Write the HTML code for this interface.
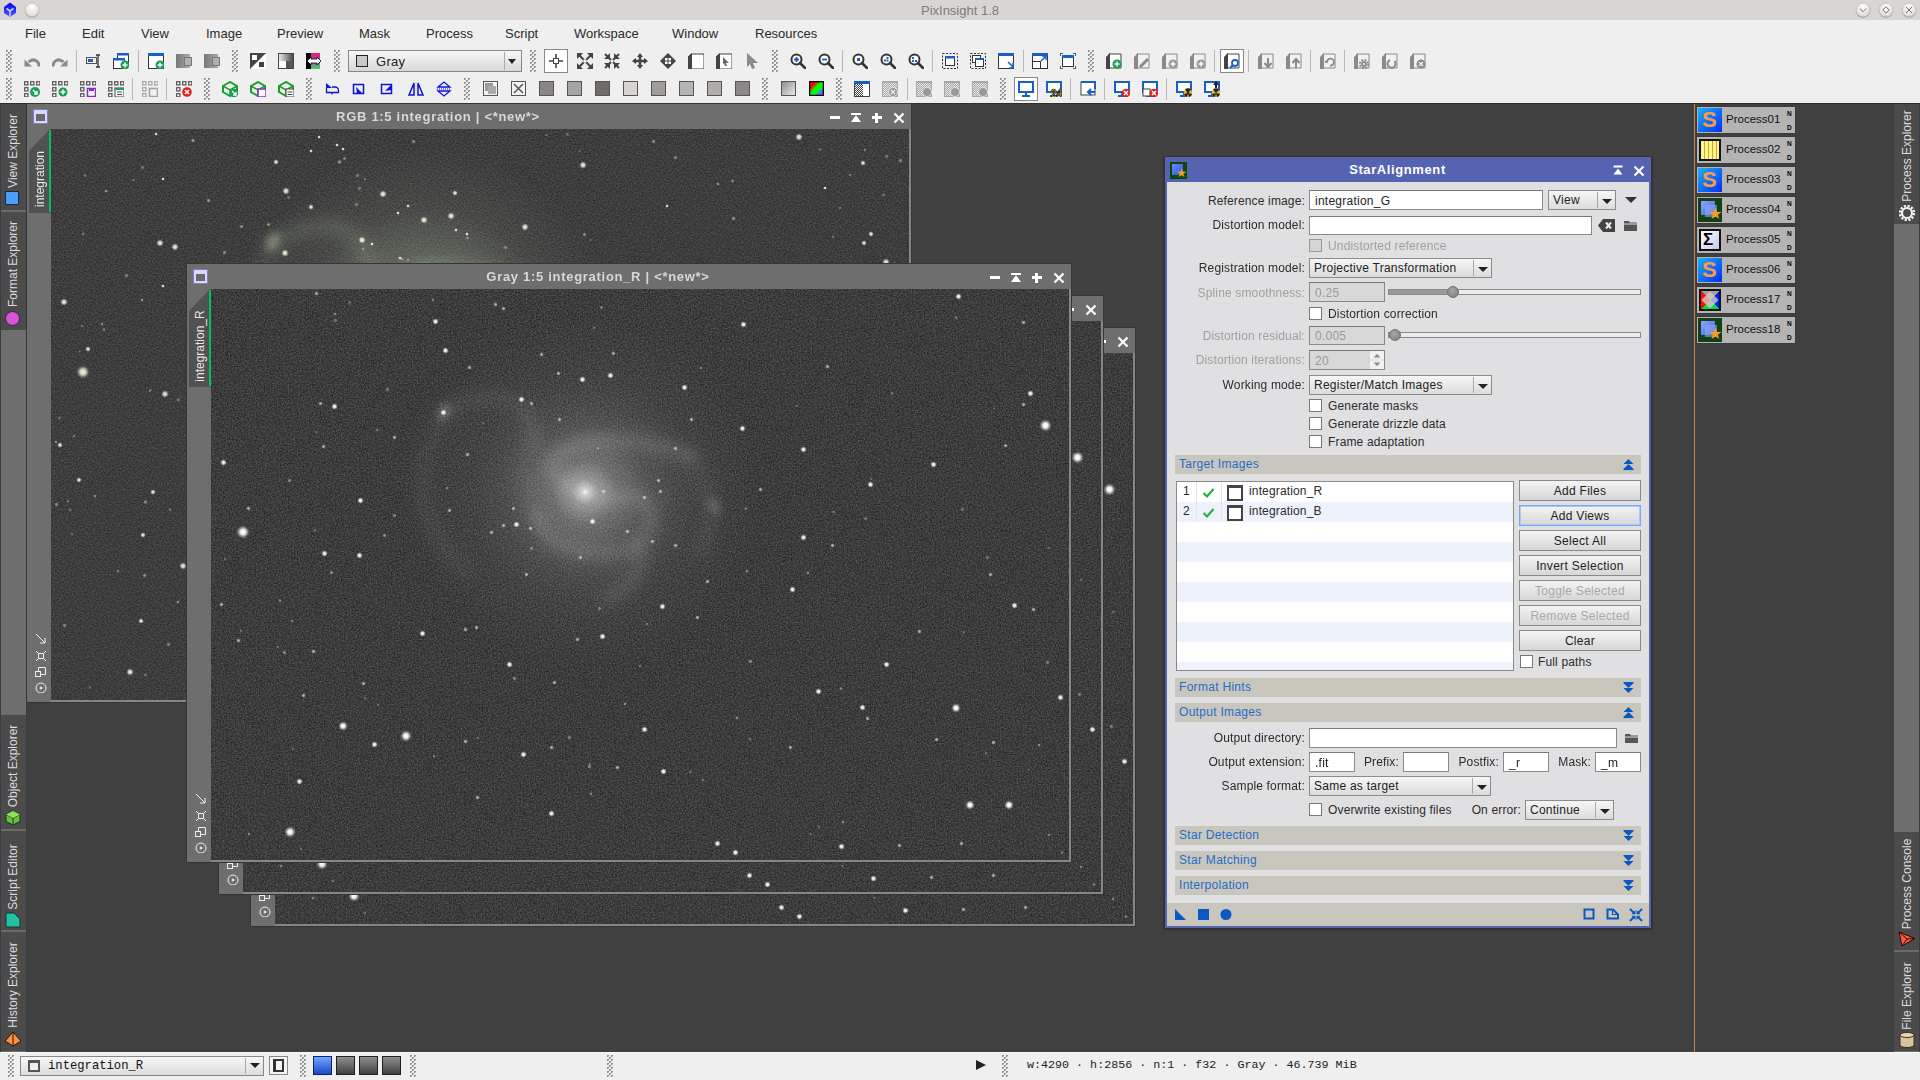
<!DOCTYPE html><html><head><meta charset="utf-8"><style>
*{margin:0;padding:0;box-sizing:border-box}
html,body{width:1920px;height:1080px;overflow:hidden}
body{position:relative;background:#404040;font-family:"Liberation Sans",sans-serif;}
.a{position:absolute}
.t{white-space:nowrap;line-height:1}
.s{position:absolute;display:block;border-radius:50%;--c:255,255,255;background:radial-gradient(circle closest-side,rgba(var(--c),var(--a)) 0,rgba(var(--c),calc(var(--a)*0.92)) 35%,rgba(var(--c),calc(var(--a)*0.45)) 62%,rgba(var(--c),calc(var(--a)*0.12)) 82%,rgba(var(--c),0) 100%)}
</style></head><body><div class="a" style="left:0px;top:0px;width:1920px;height:20px;background:#d9d5d2"></div><div class="a t" style="left:0px;top:4px;width:1920px;text-align:center;font-size:13px;color:#7f7b78">PixInsight 1.8</div><div class="a" style="left:0px;top:20px;width:1920px;height:83px;background:#efefef"></div><div class="a" style="left:0px;top:103px;width:1920px;height:1px;background:#2e2e2e"></div><div class="a t" style="left:25px;top:27px;font-size:13px;color:#2a2a2a">File</div><div class="a t" style="left:82px;top:27px;font-size:13px;color:#2a2a2a">Edit</div><div class="a t" style="left:141px;top:27px;font-size:13px;color:#2a2a2a">View</div><div class="a t" style="left:206px;top:27px;font-size:13px;color:#2a2a2a">Image</div><div class="a t" style="left:277px;top:27px;font-size:13px;color:#2a2a2a">Preview</div><div class="a t" style="left:359px;top:27px;font-size:13px;color:#2a2a2a">Mask</div><div class="a t" style="left:426px;top:27px;font-size:13px;color:#2a2a2a">Process</div><div class="a t" style="left:505px;top:27px;font-size:13px;color:#2a2a2a">Script</div><div class="a t" style="left:574px;top:27px;font-size:13px;color:#2a2a2a">Workspace</div><div class="a t" style="left:672px;top:27px;font-size:13px;color:#2a2a2a">Window</div><div class="a t" style="left:755px;top:27px;font-size:13px;color:#2a2a2a">Resources</div><div class="a" style="left:0px;top:1052px;width:1920px;height:28px;background:#efefef"></div><div class="a" style="left:0px;top:104px;width:26px;height:948px;background:#6e6e6e"></div><div class="a" style="left:26px;top:104px;width:1px;height:948px;background:#3a3a3a"></div><div class="a" style="left:1894px;top:104px;width:26px;height:948px;background:#6e6e6e"></div><div class="a" style="left:1694px;top:104px;width:1px;height:948px;background:#c08850"></div><div class="a" style="left:250px;top:327px;width:886px;height:600px;background:#353535;z-index:3"><div class="a" style="left:1px;top:1px;width:884px;height:598px;background:#6e6e6e"></div><div class="a" style="left:883px;top:26px;width:2px;height:573px;background:#868686"></div><div class="a" style="left:25px;top:597px;width:860px;height:2px;background:#868686"></div><div class="a" style="left:25px;top:26px;width:858px;height:571px;overflow:hidden;background:#393939"><svg class="a" style="left:0;top:0" width="858" height="571"><filter id="nw4" x="0" y="0" width="100%" height="100%" color-interpolation-filters="sRGB"><feTurbulence type="fractalNoise" baseFrequency="0.66" numOctaves="2" seed="29"/><feColorMatrix type="matrix" values="0.32 0 0 0 0.075  0.32 0 0 0 0.075  0.32 0 0 0 0.075  0 0 0 0 1"/></filter><rect width="858" height="571" filter="url(#nw4)"/></svg><svg class="a" style="left:174px;top:3px;overflow:visible" width="400" height="400"><defs><filter id="bnw4" x="-20%" y="-20%" width="140%" height="140%"><feGaussianBlur stdDeviation="7"/></filter><filter id="cnw4" x="-50%" y="-50%" width="200%" height="200%"><feGaussianBlur stdDeviation="4"/></filter><radialGradient id="hnw4"><stop offset="0" stop-color="rgba(255,255,255,0.34)"/><stop offset="0.2" stop-color="rgba(255,255,255,0.22)"/><stop offset="0.4" stop-color="rgba(255,255,255,0.11)"/><stop offset="0.65" stop-color="rgba(255,255,255,0.04)"/><stop offset="1" stop-color="rgba(255,255,255,0)"/></radialGradient><radialGradient id="mnw4"><stop offset="0" stop-color="rgba(255,255,255,0.08)"/><stop offset="0.6" stop-color="rgba(255,255,255,0.04)"/><stop offset="1" stop-color="rgba(255,255,255,0)"/></radialGradient><radialGradient id="knw4"><stop offset="0" stop-color="rgba(255,255,255,0.9)"/><stop offset="0.12" stop-color="rgba(255,255,255,0.55)"/><stop offset="0.4" stop-color="rgba(255,255,255,0.18)"/><stop offset="1" stop-color="rgba(255,255,255,0)"/></radialGradient></defs><circle cx="200" cy="200" r="175" fill="url(#hnw4)"/><g filter="url(#bnw4)"><path d="M190,197 Q190,197 185.0,194.5 Q180,192 173.0,186.5 Q166,181 165.5,175.0 Q165,169 171.5,164.0 Q178,159 188.5,154.5 Q199,150 212.5,148.5 Q226,147 239.0,148.5 Q252,150 265.0,152.5 Q278,155 291.5,159.5 L305,164" fill="none" stroke="rgba(255,255,255,0.10)" stroke-width="16" stroke-linecap="round" stroke-linejoin="round"/><path d="M210,204 Q210,204 220.0,205.0 Q230,206 246.0,205.5 Q262,205 265.0,214.5 Q268,224 263.0,237.0 Q258,250 248.0,255.5 Q238,261 223.5,261.5 Q209,262 195.5,260.0 Q182,258 171.5,252.0 Q161,246 156.5,236.0 L152,226" fill="none" stroke="rgba(255,255,255,0.10)" stroke-width="16" stroke-linecap="round" stroke-linejoin="round"/><path d="M255,255 Q255,255 254.5,267.5 Q254,280 247.0,289.0 Q240,298 230.0,303.0 L220,308" fill="none" stroke="rgba(255,255,255,0.09)" stroke-width="14" stroke-linecap="round" stroke-linejoin="round"/><path d="M150,150 Q150,150 147.5,138.0 Q145,126 135.0,115.5 Q125,105 107.5,105.0 Q90,105 75.0,112.5 L60,120" fill="none" stroke="rgba(255,255,255,0.07)" stroke-width="14" stroke-linecap="round" stroke-linejoin="round"/><path d="M152,226 Q152,226 146.0,213.0 Q140,200 139.0,185.0 Q138,170 144.0,160.0 L150,150" fill="none" stroke="rgba(255,255,255,0.07)" stroke-width="12" stroke-linecap="round" stroke-linejoin="round"/><path d="M60,120 Q60,120 50.0,140.0 Q40,160 37.5,180.0 Q35,200 42.5,222.5 Q50,245 65.0,262.5 L80,280" fill="none" stroke="rgba(255,255,255,0.05)" stroke-width="16" stroke-linecap="round" stroke-linejoin="round"/><path d="M305,164 Q305,164 313.5,179.5 Q322,195 325.0,210.0 Q328,225 321.5,242.5 L315,260" fill="none" stroke="rgba(255,255,255,0.06)" stroke-width="14" stroke-linecap="round" stroke-linejoin="round"/></g><g filter="url(#cnw4)"><path d="M190,197 Q190,197 185.0,194.5 Q180,192 173.0,186.5 Q166,181 165.5,175.0 Q165,169 171.5,164.0 Q178,159 188.5,154.5 Q199,150 212.5,148.5 Q226,147 239.0,148.5 Q252,150 265.0,152.5 Q278,155 291.5,159.5 L305,164" fill="none" stroke="rgba(255,255,255,0.04)" stroke-width="6" stroke-linecap="round" stroke-linejoin="round"/><path d="M210,204 Q210,204 220.0,205.0 Q230,206 246.0,205.5 Q262,205 265.0,214.5 Q268,224 263.0,237.0 Q258,250 248.0,255.5 Q238,261 223.5,261.5 Q209,262 195.5,260.0 Q182,258 171.5,252.0 Q161,246 156.5,236.0 L152,226" fill="none" stroke="rgba(255,255,255,0.04)" stroke-width="6" stroke-linecap="round" stroke-linejoin="round"/></g><g filter="url(#cnw4)"><ellipse cx="59" cy="120" rx="4" ry="9" transform="rotate(25 59 120)" fill="rgba(255,255,255,0.25)"/><ellipse cx="329" cy="214" rx="4" ry="9" transform="rotate(-30 329 214)" fill="rgba(255,255,255,0.22)"/></g><circle cx="200" cy="200" r="65" fill="url(#mnw4)"/><circle cx="200" cy="200" r="32" fill="url(#knw4)"/></svg><i class="s" style="left:24.8px;top:235.8px;width:14.4px;height:14.4px;--a:1.00"></i><i class="s" style="left:827.5px;top:129.5px;width:13.0px;height:13.0px;--a:1.00"></i><i class="s" style="left:189.2px;top:441.2px;width:11.6px;height:11.6px;--a:1.00"></i><i class="s" style="left:73.2px;top:537.2px;width:11.6px;height:11.6px;--a:1.00"></i><i class="s" style="left:739.9px;top:413.9px;width:10.1px;height:10.1px;--a:1.00"></i><i class="s" style="left:753.9px;top:510.9px;width:10.1px;height:10.1px;--a:1.00"></i><i class="s" style="left:792.9px;top:510.9px;width:10.1px;height:10.1px;--a:1.00"></i><i class="s" style="left:126.9px;top:431.9px;width:10.1px;height:10.1px;--a:1.00"></i><i class="s" style="left:9.4px;top:170.4px;width:7.1px;height:7.1px;--a:0.95"></i><i class="s" style="left:120.4px;top:114.4px;width:7.1px;height:7.1px;--a:0.95"></i><i class="s" style="left:146.4px;top:208.4px;width:7.1px;height:7.1px;--a:0.95"></i><i class="s" style="left:221.4px;top:29.4px;width:7.1px;height:7.1px;--a:0.95"></i><i class="s" style="left:231.4px;top:58.4px;width:7.1px;height:7.1px;--a:0.95"></i><i class="s" style="left:229.4px;top:120.4px;width:7.1px;height:7.1px;--a:0.95"></i><i class="s" style="left:302.4px;top:232.4px;width:7.1px;height:7.1px;--a:0.95"></i><i class="s" style="left:307.4px;top:107.4px;width:7.1px;height:7.1px;--a:0.95"></i><i class="s" style="left:368.4px;top:87.4px;width:7.1px;height:7.1px;--a:0.95"></i><i class="s" style="left:396.4px;top:83.4px;width:7.1px;height:7.1px;--a:0.95"></i><i class="s" style="left:378.4px;top:229.4px;width:7.1px;height:7.1px;--a:0.95"></i><i class="s" style="left:529.4px;top:32.4px;width:7.1px;height:7.1px;--a:0.95"></i><i class="s" style="left:470.4px;top:95.4px;width:7.1px;height:7.1px;--a:0.95"></i><i class="s" style="left:528.4px;top:136.4px;width:7.1px;height:7.1px;--a:0.95"></i><i class="s" style="left:589.4px;top:157.4px;width:7.1px;height:7.1px;--a:0.95"></i><i class="s" style="left:719.4px;top:172.4px;width:7.1px;height:7.1px;--a:0.95"></i><i class="s" style="left:656.4px;top:192.4px;width:7.1px;height:7.1px;--a:0.95"></i><i class="s" style="left:589.4px;top:245.4px;width:7.1px;height:7.1px;--a:0.95"></i><i class="s" style="left:816.4px;top:101.4px;width:7.1px;height:7.1px;--a:0.95"></i><i class="s" style="left:160.4px;top:452.4px;width:7.1px;height:7.1px;--a:0.95"></i><i class="s" style="left:85.4px;top:489.4px;width:7.1px;height:7.1px;--a:0.95"></i><i class="s" style="left:208.4px;top:341.4px;width:7.1px;height:7.1px;--a:0.95"></i><i class="s" style="left:295.4px;top:372.4px;width:7.1px;height:7.1px;--a:0.95"></i><i class="s" style="left:388.4px;top:344.4px;width:7.1px;height:7.1px;--a:0.95"></i><i class="s" style="left:309.4px;top:462.4px;width:7.1px;height:7.1px;--a:0.95"></i><i class="s" style="left:337.4px;top:521.4px;width:7.1px;height:7.1px;--a:0.95"></i><i class="s" style="left:578.4px;top:297.4px;width:7.1px;height:7.1px;--a:0.95"></i><i class="s" style="left:448.4px;top:314.4px;width:7.1px;height:7.1px;--a:0.95"></i><i class="s" style="left:672.4px;top:372.4px;width:7.1px;height:7.1px;--a:0.95"></i><i class="s" style="left:604.4px;top:399.4px;width:7.1px;height:7.1px;--a:0.95"></i><i class="s" style="left:648.4px;top:415.4px;width:7.1px;height:7.1px;--a:0.95"></i><i class="s" style="left:846.4px;top:405.4px;width:7.1px;height:7.1px;--a:0.95"></i><i class="s" style="left:430.4px;top:437.4px;width:7.1px;height:7.1px;--a:0.95"></i><i class="s" style="left:449.4px;top:479.4px;width:7.1px;height:7.1px;--a:0.95"></i><i class="s" style="left:800.4px;top:313.4px;width:7.1px;height:7.1px;--a:0.95"></i><i class="s" style="left:503.4px;top:551.4px;width:7.1px;height:7.1px;--a:0.95"></i><i class="s" style="left:521.4px;top:560.4px;width:7.1px;height:7.1px;--a:0.95"></i><i class="s" style="left:627.4px;top:554.4px;width:7.1px;height:7.1px;--a:0.95"></i><i class="s" style="left:110.4px;top:261.4px;width:7.1px;height:7.1px;--a:0.95"></i><i class="s" style="left:145.4px;top:263.4px;width:7.1px;height:7.1px;--a:0.95"></i><i class="s" style="left:744.4px;top:4.4px;width:7.1px;height:7.1px;--a:0.95"></i><i class="s" style="left:705.5px;top:340.4px;width:5.1px;height:5.1px;--a:0.60"></i><i class="s" style="left:776.5px;top:283.4px;width:5.1px;height:5.1px;--a:0.60"></i><i class="s" style="left:779.5px;top:451.4px;width:5.1px;height:5.1px;--a:0.60"></i><i class="s" style="left:685.5px;top:553.5px;width:5.1px;height:5.1px;--a:0.60"></i><i class="s" style="left:747.5px;top:551.5px;width:5.1px;height:5.1px;--a:0.60"></i><i class="s" style="left:318.4px;top:111.5px;width:5.1px;height:5.1px;--a:0.60"></i><i class="s" style="left:346.4px;top:127.5px;width:5.1px;height:5.1px;--a:0.60"></i><i class="s" style="left:478.4px;top:127.5px;width:5.1px;height:5.1px;--a:0.60"></i><i class="s" style="left:447.4px;top:200.4px;width:5.1px;height:5.1px;--a:0.60"></i><i class="s" style="left:431.4px;top:206.4px;width:5.1px;height:5.1px;--a:0.60"></i><i class="s" style="left:390.4px;top:200.4px;width:5.1px;height:5.1px;--a:0.60"></i><i class="s" style="left:278.4px;top:241.4px;width:5.1px;height:5.1px;--a:0.60"></i><i class="s" style="left:317.4px;top:237.4px;width:5.1px;height:5.1px;--a:0.60"></i><i class="s" style="left:300.4px;top:217.4px;width:5.1px;height:5.1px;--a:0.60"></i><i class="s" style="left:414.4px;top:240.4px;width:5.1px;height:5.1px;--a:0.60"></i><i class="s" style="left:462.4px;top:254.4px;width:5.1px;height:5.1px;--a:0.60"></i><i class="s" style="left:367.4px;top:266.4px;width:5.1px;height:5.1px;--a:0.60"></i><i class="s" style="left:494.4px;top:290.4px;width:5.1px;height:5.1px;--a:0.60"></i><i class="s" style="left:313.4px;top:283.4px;width:5.1px;height:5.1px;--a:0.60"></i><i class="s" style="left:345.4px;top:81.5px;width:5.1px;height:5.1px;--a:0.60"></i><i class="s" style="left:34.5px;top:217.4px;width:5.1px;height:5.1px;--a:0.60"></i><i class="s" style="left:106.5px;top:111.5px;width:5.1px;height:5.1px;--a:0.60"></i><i class="s" style="left:109.5px;top:155.4px;width:5.1px;height:5.1px;--a:0.60"></i><i class="s" style="left:256.4px;top:75.5px;width:5.1px;height:5.1px;--a:0.60"></i><i class="s" style="left:181.4px;top:146.4px;width:5.1px;height:5.1px;--a:0.60"></i><i class="s" style="left:254.4px;top:163.4px;width:5.1px;height:5.1px;--a:0.60"></i><i class="s" style="left:236.4px;top:219.4px;width:5.1px;height:5.1px;--a:0.60"></i><i class="s" style="left:290.4px;top:234.4px;width:5.1px;height:5.1px;--a:0.60"></i><i class="s" style="left:328.4px;top:62.5px;width:5.1px;height:5.1px;--a:0.60"></i><i class="s" style="left:400.4px;top:61.5px;width:5.1px;height:5.1px;--a:0.60"></i><i class="s" style="left:282.4px;top:13.4px;width:5.1px;height:5.1px;--a:0.60"></i><i class="s" style="left:290.4px;top:17.4px;width:5.1px;height:5.1px;--a:0.60"></i><i class="s" style="left:102.5px;top:1.5px;width:5.1px;height:5.1px;--a:0.60"></i><i class="s" style="left:809.5px;top:31.4px;width:5.1px;height:5.1px;--a:0.60"></i><i class="s" style="left:809.5px;top:112.5px;width:5.1px;height:5.1px;--a:0.60"></i><i class="s" style="left:462.4px;top:157.4px;width:5.1px;height:5.1px;--a:0.60"></i><i class="s" style="left:546.5px;top:198.4px;width:5.1px;height:5.1px;--a:0.60"></i><i class="s" style="left:618.5px;top:254.4px;width:5.1px;height:5.1px;--a:0.60"></i><i class="s" style="left:439.4px;top:250.4px;width:5.1px;height:5.1px;--a:0.60"></i><i class="s" style="left:613.5px;top:74.5px;width:5.1px;height:5.1px;--a:0.60"></i><i class="s" style="left:791.5px;top:154.4px;width:5.1px;height:5.1px;--a:0.60"></i><i class="s" style="left:445.4px;top:189.4px;width:5.1px;height:5.1px;--a:0.60"></i><i class="s" style="left:7.5px;top:313.4px;width:5.1px;height:5.1px;--a:0.60"></i><i class="s" style="left:25.4px;top:349.4px;width:5.1px;height:5.1px;--a:0.60"></i><i class="s" style="left:99.5px;top:360.4px;width:5.1px;height:5.1px;--a:0.60"></i><i class="s" style="left:89.5px;top:404.4px;width:5.1px;height:5.1px;--a:0.60"></i><i class="s" style="left:364.4px;top:348.4px;width:5.1px;height:5.1px;--a:0.60"></i><i class="s" style="left:341.4px;top:391.4px;width:5.1px;height:5.1px;--a:0.60"></i><i class="s" style="left:264.4px;top:506.4px;width:5.1px;height:5.1px;--a:0.60"></i><i class="s" style="left:404.4px;top:476.4px;width:5.1px;height:5.1px;--a:0.60"></i><i class="s" style="left:338.4px;top:456.4px;width:5.1px;height:5.1px;--a:0.60"></i><i class="s" style="left:252.4px;top:450.4px;width:5.1px;height:5.1px;--a:0.60"></i><i class="s" style="left:150.4px;top:392.4px;width:5.1px;height:5.1px;--a:0.60"></i><i class="s" style="left:263.4px;top:336.4px;width:5.1px;height:5.1px;--a:0.60"></i><i class="s" style="left:252.4px;top:338.4px;width:5.1px;height:5.1px;--a:0.60"></i><i class="s" style="left:484.4px;top:326.4px;width:5.1px;height:5.1px;--a:0.60"></i><i class="s" style="left:653.5px;top:427.4px;width:5.1px;height:5.1px;--a:0.60"></i><i class="s" style="left:576.5px;top:456.4px;width:5.1px;height:5.1px;--a:0.60"></i><i class="s" style="left:722.5px;top:448.4px;width:5.1px;height:5.1px;--a:0.60"></i><i class="s" style="left:819.5px;top:318.4px;width:5.1px;height:5.1px;--a:0.60"></i><i class="s" style="left:386.1px;top:316.5px;width:5.0px;height:5.0px;--a:0.34"></i><i class="s" style="left:433.7px;top:332.5px;width:4.0px;height:4.0px;--a:0.35"></i><i class="s" style="left:537.2px;top:447.9px;width:3.9px;height:3.9px;--a:0.31"></i><i class="s" style="left:79.5px;top:456.9px;width:4.7px;height:4.7px;--a:0.26"></i><i class="s" style="left:835.6px;top:543.9px;width:4.6px;height:4.6px;--a:0.37"></i><i class="s" style="left:136.3px;top:11.2px;width:4.5px;height:4.5px;--a:0.26"></i><i class="s" style="left:164.4px;top:138.8px;width:3.8px;height:3.8px;--a:0.34"></i><i class="s" style="left:376.3px;top:475.4px;width:4.4px;height:4.4px;--a:0.38"></i><i class="s" style="left:426.6px;top:374.5px;width:4.4px;height:4.4px;--a:0.31"></i><i class="s" style="left:848.6px;top:561.1px;width:4.9px;height:4.9px;--a:0.39"></i><i class="s" style="left:270.3px;top:131.8px;width:4.1px;height:4.1px;--a:0.26"></i><i class="s" style="left:652.4px;top:227.2px;width:4.9px;height:4.9px;--a:0.33"></i><i class="s" style="left:815.5px;top:478.5px;width:3.7px;height:3.7px;--a:0.29"></i><i class="s" style="left:774.4px;top:266.1px;width:5.1px;height:5.1px;--a:0.33"></i><i class="s" style="left:64.5px;top:355.7px;width:4.8px;height:4.8px;--a:0.30"></i><i class="s" style="left:76.4px;top:189.1px;width:5.1px;height:5.1px;--a:0.40"></i><i class="s" style="left:103.1px;top:141.3px;width:3.9px;height:3.9px;--a:0.26"></i><i class="s" style="left:678.6px;top:102.4px;width:4.5px;height:4.5px;--a:0.34"></i><i class="s" style="left:164.7px;top:413.6px;width:3.9px;height:3.9px;--a:0.38"></i><i class="s" style="left:101.8px;top:239.0px;width:4.0px;height:4.0px;--a:0.30"></i><i class="s" style="left:826.3px;top:453.6px;width:4.2px;height:4.2px;--a:0.43"></i><i class="s" style="left:181.2px;top:223.7px;width:4.9px;height:4.9px;--a:0.38"></i><i class="s" style="left:88.1px;top:558.0px;width:4.0px;height:4.0px;--a:0.30"></i><i class="s" style="left:658.2px;top:187.5px;width:4.1px;height:4.1px;--a:0.26"></i><i class="s" style="left:79.4px;top:329.9px;width:4.1px;height:4.1px;--a:0.37"></i><i class="s" style="left:317.7px;top:256.7px;width:5.0px;height:5.0px;--a:0.35"></i><i class="s" style="left:490.2px;top:489.1px;width:4.0px;height:4.0px;--a:0.28"></i><i class="s" style="left:773.3px;top:461.7px;width:4.1px;height:4.1px;--a:0.29"></i><i class="s" style="left:630.0px;top:530.6px;width:4.0px;height:4.0px;--a:0.44"></i><i class="s" style="left:750.9px;top:341.4px;width:4.3px;height:4.3px;--a:0.27"></i><i class="s" style="left:35.8px;top:543.0px;width:4.1px;height:4.1px;--a:0.39"></i><i class="s" style="left:220.6px;top:464.8px;width:4.6px;height:4.6px;--a:0.31"></i><i class="s" style="left:151.9px;top:407.2px;width:3.8px;height:3.8px;--a:0.30"></i><i class="s" style="left:477.1px;top:480.9px;width:4.6px;height:4.6px;--a:0.31"></i><i class="s" style="left:781.0px;top:117.6px;width:3.8px;height:3.8px;--a:0.30"></i><i class="s" style="left:381.0px;top:36.9px;width:4.0px;height:4.0px;--a:0.32"></i><i class="s" style="left:488.1px;top:76.7px;width:4.2px;height:4.2px;--a:0.43"></i><i class="s" style="left:834.1px;top:371.2px;width:4.7px;height:4.7px;--a:0.37"></i><i class="s" style="left:122.1px;top:22.8px;width:3.8px;height:3.8px;--a:0.43"></i><i class="s" style="left:597.5px;top:543.2px;width:3.8px;height:3.8px;--a:0.38"></i><i class="s" style="left:411.8px;top:412.7px;width:4.2px;height:4.2px;--a:0.45"></i><i class="s" style="left:66.5px;top:309.0px;width:4.7px;height:4.7px;--a:0.43"></i><i class="s" style="left:627.6px;top:397.4px;width:4.8px;height:4.8px;--a:0.43"></i><i class="s" style="left:300.9px;top:386.9px;width:5.0px;height:5.0px;--a:0.42"></i><i class="s" style="left:356.3px;top:446.0px;width:4.9px;height:4.9px;--a:0.36"></i><i class="s" style="left:532.7px;top:217.2px;width:4.5px;height:4.5px;--a:0.37"></i><i class="s" style="left:70.5px;top:361.2px;width:5.1px;height:5.1px;--a:0.43"></i><i class="s" style="left:620.1px;top:220.5px;width:4.7px;height:4.7px;--a:0.37"></i><i class="s" style="left:376.6px;top:473.4px;width:3.9px;height:3.9px;--a:0.40"></i><i class="s" style="left:28.1px;top:340.1px;width:4.4px;height:4.4px;--a:0.30"></i><i class="s" style="left:594.9px;top:281.7px;width:4.6px;height:4.6px;--a:0.43"></i><i class="s" style="left:219.9px;top:9.3px;width:4.1px;height:4.1px;--a:0.39"></i><i class="s" style="left:174.3px;top:97.7px;width:5.0px;height:5.0px;--a:0.38"></i><i class="s" style="left:377.7px;top:503.2px;width:4.2px;height:4.2px;--a:0.38"></i><i class="s" style="left:170.9px;top:244.3px;width:4.8px;height:4.8px;--a:0.43"></i><i class="s" style="left:749.2px;top:218.4px;width:4.5px;height:4.5px;--a:0.31"></i><i class="s" style="left:118.0px;top:281.1px;width:4.9px;height:4.9px;--a:0.42"></i><i class="s" style="left:606.1px;top:535.9px;width:4.1px;height:4.1px;--a:0.28"></i><i class="s" style="left:385.1px;top:157.4px;width:4.0px;height:4.0px;--a:0.33"></i><i class="s" style="left:533.5px;top:280.0px;width:4.2px;height:4.2px;--a:0.42"></i><i class="s" style="left:835.8px;top:256.9px;width:3.8px;height:3.8px;--a:0.26"></i><i class="s" style="left:742.8px;top:25.9px;width:4.7px;height:4.7px;--a:0.36"></i><i class="s" style="left:265.2px;top:447.2px;width:3.8px;height:3.8px;--a:0.28"></i><i class="s" style="left:388.3px;top:16.4px;width:4.9px;height:4.9px;--a:0.30"></i><i class="s" style="left:122.2px;top:29.0px;width:4.6px;height:4.6px;--a:0.34"></i><i class="s" style="left:536.8px;top:370.1px;width:4.8px;height:4.8px;--a:0.44"></i><i class="s" style="left:583.3px;top:114.6px;width:4.4px;height:4.4px;--a:0.29"></i><i class="s" style="left:11.8px;top:267.5px;width:4.7px;height:4.7px;--a:0.29"></i><i class="s" style="left:233.6px;top:196.6px;width:4.7px;height:4.7px;--a:0.35"></i><i class="s" style="left:523.9px;top:427.1px;width:4.3px;height:4.3px;--a:0.41"></i></div><div class="a t" style="left:112px;top:7px;width:600px;text-align:center;font-weight:bold;font-size:13px;letter-spacing:0.7px;color:#d8d8d8">Gray 1:5 integration_B | &lt;*new*&gt;</div><div class="a" style="left:7px;top:6px;width:15px;height:15px;background:#d8d8ff;border:1px solid #8080c0"><div class="a" style="left:2px;top:4px;width:9px;height:7px;background:#6a6a6a"></div></div><div class="a" style="left:3px;top:26px;width:22px;height:98px;background:#515151;clip-path:polygon(0 22px,21px 0,100% 0,100% 100%,0 100%)"></div><div class="a" style="left:23px;top:27px;width:2px;height:96px;background:#00c060"></div><div class="a t" style="left:-46px;top:77.0px;width:120px;text-align:center;transform:rotate(-90deg);font-size:12px;color:#e8e8e8">integration_B</div><div class="a" style="left:804px;top:13px;width:10px;height:3px;background:#fff"></div><div class="a" style="left:825px;top:10px;width:10px;height:2px;background:#fff"></div><div class="a" style="left:825px;top:12px;width:0;height:0;border-left:5px solid transparent;border-right:5px solid transparent;border-bottom:7px solid #fff"></div><div class="a" style="left:846px;top:13px;width:10px;height:3px;background:#fff"></div><div class="a" style="left:849px;top:10px;width:3px;height:10px;background:#fff"></div><svg class="a" style="left:867px;top:9px" width="12" height="12"><path d="M1.5 1.5L10.5 10.5M10.5 1.5L1.5 10.5" stroke="#fff" stroke-width="2.2"/></svg><svg class="a" style="left:9px;top:530px" width="12" height="60"><g fill="none" stroke="#f0f0f0" stroke-width="1"><path d="M1 1L10 10M10 5V10H5"/><rect x="3.5" y="20.5" width="5" height="5"/><path d="M1 18L4 21M11 18L8 21M1 28L4 25M11 28L8 25"/><rect x="0.5" y="38.5" width="5" height="5"/><path d="M3.5 38.5V34.5H10.5V41.5H5.5"/><circle cx="6" cy="55" r="5"/><circle cx="6" cy="55" r="1" fill="#f0f0f0"/></g></svg></div><div class="a" style="left:218px;top:295px;width:886px;height:600px;background:#353535;z-index:4"><div class="a" style="left:1px;top:1px;width:884px;height:598px;background:#6e6e6e"></div><div class="a" style="left:883px;top:26px;width:2px;height:573px;background:#868686"></div><div class="a" style="left:25px;top:597px;width:860px;height:2px;background:#868686"></div><div class="a" style="left:25px;top:26px;width:858px;height:571px;overflow:hidden;background:#393939"><svg class="a" style="left:0;top:0" width="858" height="571"><filter id="nw3" x="0" y="0" width="100%" height="100%" color-interpolation-filters="sRGB"><feTurbulence type="fractalNoise" baseFrequency="0.66" numOctaves="2" seed="20"/><feColorMatrix type="matrix" values="0.32 0 0 0 0.075  0.32 0 0 0 0.075  0.32 0 0 0 0.075  0 0 0 0 1"/></filter><rect width="858" height="571" filter="url(#nw3)"/></svg><svg class="a" style="left:174px;top:3px;overflow:visible" width="400" height="400"><defs><filter id="bnw3" x="-20%" y="-20%" width="140%" height="140%"><feGaussianBlur stdDeviation="7"/></filter><filter id="cnw3" x="-50%" y="-50%" width="200%" height="200%"><feGaussianBlur stdDeviation="4"/></filter><radialGradient id="hnw3"><stop offset="0" stop-color="rgba(255,255,255,0.34)"/><stop offset="0.2" stop-color="rgba(255,255,255,0.22)"/><stop offset="0.4" stop-color="rgba(255,255,255,0.11)"/><stop offset="0.65" stop-color="rgba(255,255,255,0.04)"/><stop offset="1" stop-color="rgba(255,255,255,0)"/></radialGradient><radialGradient id="mnw3"><stop offset="0" stop-color="rgba(255,255,255,0.08)"/><stop offset="0.6" stop-color="rgba(255,255,255,0.04)"/><stop offset="1" stop-color="rgba(255,255,255,0)"/></radialGradient><radialGradient id="knw3"><stop offset="0" stop-color="rgba(255,255,255,0.9)"/><stop offset="0.12" stop-color="rgba(255,255,255,0.55)"/><stop offset="0.4" stop-color="rgba(255,255,255,0.18)"/><stop offset="1" stop-color="rgba(255,255,255,0)"/></radialGradient></defs><circle cx="200" cy="200" r="175" fill="url(#hnw3)"/><g filter="url(#bnw3)"><path d="M190,197 Q190,197 185.0,194.5 Q180,192 173.0,186.5 Q166,181 165.5,175.0 Q165,169 171.5,164.0 Q178,159 188.5,154.5 Q199,150 212.5,148.5 Q226,147 239.0,148.5 Q252,150 265.0,152.5 Q278,155 291.5,159.5 L305,164" fill="none" stroke="rgba(255,255,255,0.10)" stroke-width="16" stroke-linecap="round" stroke-linejoin="round"/><path d="M210,204 Q210,204 220.0,205.0 Q230,206 246.0,205.5 Q262,205 265.0,214.5 Q268,224 263.0,237.0 Q258,250 248.0,255.5 Q238,261 223.5,261.5 Q209,262 195.5,260.0 Q182,258 171.5,252.0 Q161,246 156.5,236.0 L152,226" fill="none" stroke="rgba(255,255,255,0.10)" stroke-width="16" stroke-linecap="round" stroke-linejoin="round"/><path d="M255,255 Q255,255 254.5,267.5 Q254,280 247.0,289.0 Q240,298 230.0,303.0 L220,308" fill="none" stroke="rgba(255,255,255,0.09)" stroke-width="14" stroke-linecap="round" stroke-linejoin="round"/><path d="M150,150 Q150,150 147.5,138.0 Q145,126 135.0,115.5 Q125,105 107.5,105.0 Q90,105 75.0,112.5 L60,120" fill="none" stroke="rgba(255,255,255,0.07)" stroke-width="14" stroke-linecap="round" stroke-linejoin="round"/><path d="M152,226 Q152,226 146.0,213.0 Q140,200 139.0,185.0 Q138,170 144.0,160.0 L150,150" fill="none" stroke="rgba(255,255,255,0.07)" stroke-width="12" stroke-linecap="round" stroke-linejoin="round"/><path d="M60,120 Q60,120 50.0,140.0 Q40,160 37.5,180.0 Q35,200 42.5,222.5 Q50,245 65.0,262.5 L80,280" fill="none" stroke="rgba(255,255,255,0.05)" stroke-width="16" stroke-linecap="round" stroke-linejoin="round"/><path d="M305,164 Q305,164 313.5,179.5 Q322,195 325.0,210.0 Q328,225 321.5,242.5 L315,260" fill="none" stroke="rgba(255,255,255,0.06)" stroke-width="14" stroke-linecap="round" stroke-linejoin="round"/></g><g filter="url(#cnw3)"><path d="M190,197 Q190,197 185.0,194.5 Q180,192 173.0,186.5 Q166,181 165.5,175.0 Q165,169 171.5,164.0 Q178,159 188.5,154.5 Q199,150 212.5,148.5 Q226,147 239.0,148.5 Q252,150 265.0,152.5 Q278,155 291.5,159.5 L305,164" fill="none" stroke="rgba(255,255,255,0.04)" stroke-width="6" stroke-linecap="round" stroke-linejoin="round"/><path d="M210,204 Q210,204 220.0,205.0 Q230,206 246.0,205.5 Q262,205 265.0,214.5 Q268,224 263.0,237.0 Q258,250 248.0,255.5 Q238,261 223.5,261.5 Q209,262 195.5,260.0 Q182,258 171.5,252.0 Q161,246 156.5,236.0 L152,226" fill="none" stroke="rgba(255,255,255,0.04)" stroke-width="6" stroke-linecap="round" stroke-linejoin="round"/></g><g filter="url(#cnw3)"><ellipse cx="59" cy="120" rx="4" ry="9" transform="rotate(25 59 120)" fill="rgba(255,255,255,0.25)"/><ellipse cx="329" cy="214" rx="4" ry="9" transform="rotate(-30 329 214)" fill="rgba(255,255,255,0.22)"/></g><circle cx="200" cy="200" r="65" fill="url(#mnw3)"/><circle cx="200" cy="200" r="32" fill="url(#knw3)"/></svg><i class="s" style="left:24.8px;top:235.8px;width:14.4px;height:14.4px;--a:1.00"></i><i class="s" style="left:827.5px;top:129.5px;width:13.0px;height:13.0px;--a:1.00"></i><i class="s" style="left:189.2px;top:441.2px;width:11.6px;height:11.6px;--a:1.00"></i><i class="s" style="left:73.2px;top:537.2px;width:11.6px;height:11.6px;--a:1.00"></i><i class="s" style="left:739.9px;top:413.9px;width:10.1px;height:10.1px;--a:1.00"></i><i class="s" style="left:753.9px;top:510.9px;width:10.1px;height:10.1px;--a:1.00"></i><i class="s" style="left:792.9px;top:510.9px;width:10.1px;height:10.1px;--a:1.00"></i><i class="s" style="left:126.9px;top:431.9px;width:10.1px;height:10.1px;--a:1.00"></i><i class="s" style="left:9.4px;top:170.4px;width:7.1px;height:7.1px;--a:0.95"></i><i class="s" style="left:120.4px;top:114.4px;width:7.1px;height:7.1px;--a:0.95"></i><i class="s" style="left:146.4px;top:208.4px;width:7.1px;height:7.1px;--a:0.95"></i><i class="s" style="left:221.4px;top:29.4px;width:7.1px;height:7.1px;--a:0.95"></i><i class="s" style="left:231.4px;top:58.4px;width:7.1px;height:7.1px;--a:0.95"></i><i class="s" style="left:229.4px;top:120.4px;width:7.1px;height:7.1px;--a:0.95"></i><i class="s" style="left:302.4px;top:232.4px;width:7.1px;height:7.1px;--a:0.95"></i><i class="s" style="left:307.4px;top:107.4px;width:7.1px;height:7.1px;--a:0.95"></i><i class="s" style="left:368.4px;top:87.4px;width:7.1px;height:7.1px;--a:0.95"></i><i class="s" style="left:396.4px;top:83.4px;width:7.1px;height:7.1px;--a:0.95"></i><i class="s" style="left:378.4px;top:229.4px;width:7.1px;height:7.1px;--a:0.95"></i><i class="s" style="left:529.4px;top:32.4px;width:7.1px;height:7.1px;--a:0.95"></i><i class="s" style="left:470.4px;top:95.4px;width:7.1px;height:7.1px;--a:0.95"></i><i class="s" style="left:528.4px;top:136.4px;width:7.1px;height:7.1px;--a:0.95"></i><i class="s" style="left:589.4px;top:157.4px;width:7.1px;height:7.1px;--a:0.95"></i><i class="s" style="left:719.4px;top:172.4px;width:7.1px;height:7.1px;--a:0.95"></i><i class="s" style="left:656.4px;top:192.4px;width:7.1px;height:7.1px;--a:0.95"></i><i class="s" style="left:589.4px;top:245.4px;width:7.1px;height:7.1px;--a:0.95"></i><i class="s" style="left:816.4px;top:101.4px;width:7.1px;height:7.1px;--a:0.95"></i><i class="s" style="left:160.4px;top:452.4px;width:7.1px;height:7.1px;--a:0.95"></i><i class="s" style="left:85.4px;top:489.4px;width:7.1px;height:7.1px;--a:0.95"></i><i class="s" style="left:208.4px;top:341.4px;width:7.1px;height:7.1px;--a:0.95"></i><i class="s" style="left:295.4px;top:372.4px;width:7.1px;height:7.1px;--a:0.95"></i><i class="s" style="left:388.4px;top:344.4px;width:7.1px;height:7.1px;--a:0.95"></i><i class="s" style="left:309.4px;top:462.4px;width:7.1px;height:7.1px;--a:0.95"></i><i class="s" style="left:337.4px;top:521.4px;width:7.1px;height:7.1px;--a:0.95"></i><i class="s" style="left:578.4px;top:297.4px;width:7.1px;height:7.1px;--a:0.95"></i><i class="s" style="left:448.4px;top:314.4px;width:7.1px;height:7.1px;--a:0.95"></i><i class="s" style="left:672.4px;top:372.4px;width:7.1px;height:7.1px;--a:0.95"></i><i class="s" style="left:604.4px;top:399.4px;width:7.1px;height:7.1px;--a:0.95"></i><i class="s" style="left:648.4px;top:415.4px;width:7.1px;height:7.1px;--a:0.95"></i><i class="s" style="left:846.4px;top:405.4px;width:7.1px;height:7.1px;--a:0.95"></i><i class="s" style="left:430.4px;top:437.4px;width:7.1px;height:7.1px;--a:0.95"></i><i class="s" style="left:449.4px;top:479.4px;width:7.1px;height:7.1px;--a:0.95"></i><i class="s" style="left:800.4px;top:313.4px;width:7.1px;height:7.1px;--a:0.95"></i><i class="s" style="left:503.4px;top:551.4px;width:7.1px;height:7.1px;--a:0.95"></i><i class="s" style="left:521.4px;top:560.4px;width:7.1px;height:7.1px;--a:0.95"></i><i class="s" style="left:627.4px;top:554.4px;width:7.1px;height:7.1px;--a:0.95"></i><i class="s" style="left:110.4px;top:261.4px;width:7.1px;height:7.1px;--a:0.95"></i><i class="s" style="left:145.4px;top:263.4px;width:7.1px;height:7.1px;--a:0.95"></i><i class="s" style="left:744.4px;top:4.4px;width:7.1px;height:7.1px;--a:0.95"></i><i class="s" style="left:705.5px;top:340.4px;width:5.1px;height:5.1px;--a:0.60"></i><i class="s" style="left:776.5px;top:283.4px;width:5.1px;height:5.1px;--a:0.60"></i><i class="s" style="left:779.5px;top:451.4px;width:5.1px;height:5.1px;--a:0.60"></i><i class="s" style="left:685.5px;top:553.5px;width:5.1px;height:5.1px;--a:0.60"></i><i class="s" style="left:747.5px;top:551.5px;width:5.1px;height:5.1px;--a:0.60"></i><i class="s" style="left:318.4px;top:111.5px;width:5.1px;height:5.1px;--a:0.60"></i><i class="s" style="left:346.4px;top:127.5px;width:5.1px;height:5.1px;--a:0.60"></i><i class="s" style="left:478.4px;top:127.5px;width:5.1px;height:5.1px;--a:0.60"></i><i class="s" style="left:447.4px;top:200.4px;width:5.1px;height:5.1px;--a:0.60"></i><i class="s" style="left:431.4px;top:206.4px;width:5.1px;height:5.1px;--a:0.60"></i><i class="s" style="left:390.4px;top:200.4px;width:5.1px;height:5.1px;--a:0.60"></i><i class="s" style="left:278.4px;top:241.4px;width:5.1px;height:5.1px;--a:0.60"></i><i class="s" style="left:317.4px;top:237.4px;width:5.1px;height:5.1px;--a:0.60"></i><i class="s" style="left:300.4px;top:217.4px;width:5.1px;height:5.1px;--a:0.60"></i><i class="s" style="left:414.4px;top:240.4px;width:5.1px;height:5.1px;--a:0.60"></i><i class="s" style="left:462.4px;top:254.4px;width:5.1px;height:5.1px;--a:0.60"></i><i class="s" style="left:367.4px;top:266.4px;width:5.1px;height:5.1px;--a:0.60"></i><i class="s" style="left:494.4px;top:290.4px;width:5.1px;height:5.1px;--a:0.60"></i><i class="s" style="left:313.4px;top:283.4px;width:5.1px;height:5.1px;--a:0.60"></i><i class="s" style="left:345.4px;top:81.5px;width:5.1px;height:5.1px;--a:0.60"></i><i class="s" style="left:34.5px;top:217.4px;width:5.1px;height:5.1px;--a:0.60"></i><i class="s" style="left:106.5px;top:111.5px;width:5.1px;height:5.1px;--a:0.60"></i><i class="s" style="left:109.5px;top:155.4px;width:5.1px;height:5.1px;--a:0.60"></i><i class="s" style="left:256.4px;top:75.5px;width:5.1px;height:5.1px;--a:0.60"></i><i class="s" style="left:181.4px;top:146.4px;width:5.1px;height:5.1px;--a:0.60"></i><i class="s" style="left:254.4px;top:163.4px;width:5.1px;height:5.1px;--a:0.60"></i><i class="s" style="left:236.4px;top:219.4px;width:5.1px;height:5.1px;--a:0.60"></i><i class="s" style="left:290.4px;top:234.4px;width:5.1px;height:5.1px;--a:0.60"></i><i class="s" style="left:328.4px;top:62.5px;width:5.1px;height:5.1px;--a:0.60"></i><i class="s" style="left:400.4px;top:61.5px;width:5.1px;height:5.1px;--a:0.60"></i><i class="s" style="left:282.4px;top:13.4px;width:5.1px;height:5.1px;--a:0.60"></i><i class="s" style="left:290.4px;top:17.4px;width:5.1px;height:5.1px;--a:0.60"></i><i class="s" style="left:102.5px;top:1.5px;width:5.1px;height:5.1px;--a:0.60"></i><i class="s" style="left:809.5px;top:31.4px;width:5.1px;height:5.1px;--a:0.60"></i><i class="s" style="left:809.5px;top:112.5px;width:5.1px;height:5.1px;--a:0.60"></i><i class="s" style="left:462.4px;top:157.4px;width:5.1px;height:5.1px;--a:0.60"></i><i class="s" style="left:546.5px;top:198.4px;width:5.1px;height:5.1px;--a:0.60"></i><i class="s" style="left:618.5px;top:254.4px;width:5.1px;height:5.1px;--a:0.60"></i><i class="s" style="left:439.4px;top:250.4px;width:5.1px;height:5.1px;--a:0.60"></i><i class="s" style="left:613.5px;top:74.5px;width:5.1px;height:5.1px;--a:0.60"></i><i class="s" style="left:791.5px;top:154.4px;width:5.1px;height:5.1px;--a:0.60"></i><i class="s" style="left:445.4px;top:189.4px;width:5.1px;height:5.1px;--a:0.60"></i><i class="s" style="left:7.5px;top:313.4px;width:5.1px;height:5.1px;--a:0.60"></i><i class="s" style="left:25.4px;top:349.4px;width:5.1px;height:5.1px;--a:0.60"></i><i class="s" style="left:99.5px;top:360.4px;width:5.1px;height:5.1px;--a:0.60"></i><i class="s" style="left:89.5px;top:404.4px;width:5.1px;height:5.1px;--a:0.60"></i><i class="s" style="left:364.4px;top:348.4px;width:5.1px;height:5.1px;--a:0.60"></i><i class="s" style="left:341.4px;top:391.4px;width:5.1px;height:5.1px;--a:0.60"></i><i class="s" style="left:264.4px;top:506.4px;width:5.1px;height:5.1px;--a:0.60"></i><i class="s" style="left:404.4px;top:476.4px;width:5.1px;height:5.1px;--a:0.60"></i><i class="s" style="left:338.4px;top:456.4px;width:5.1px;height:5.1px;--a:0.60"></i><i class="s" style="left:252.4px;top:450.4px;width:5.1px;height:5.1px;--a:0.60"></i><i class="s" style="left:150.4px;top:392.4px;width:5.1px;height:5.1px;--a:0.60"></i><i class="s" style="left:263.4px;top:336.4px;width:5.1px;height:5.1px;--a:0.60"></i><i class="s" style="left:252.4px;top:338.4px;width:5.1px;height:5.1px;--a:0.60"></i><i class="s" style="left:484.4px;top:326.4px;width:5.1px;height:5.1px;--a:0.60"></i><i class="s" style="left:653.5px;top:427.4px;width:5.1px;height:5.1px;--a:0.60"></i><i class="s" style="left:576.5px;top:456.4px;width:5.1px;height:5.1px;--a:0.60"></i><i class="s" style="left:722.5px;top:448.4px;width:5.1px;height:5.1px;--a:0.60"></i><i class="s" style="left:819.5px;top:318.4px;width:5.1px;height:5.1px;--a:0.60"></i><i class="s" style="left:386.1px;top:316.5px;width:5.0px;height:5.0px;--a:0.34"></i><i class="s" style="left:433.7px;top:332.5px;width:4.0px;height:4.0px;--a:0.35"></i><i class="s" style="left:537.2px;top:447.9px;width:3.9px;height:3.9px;--a:0.31"></i><i class="s" style="left:79.5px;top:456.9px;width:4.7px;height:4.7px;--a:0.26"></i><i class="s" style="left:835.6px;top:543.9px;width:4.6px;height:4.6px;--a:0.37"></i><i class="s" style="left:136.3px;top:11.2px;width:4.5px;height:4.5px;--a:0.26"></i><i class="s" style="left:164.4px;top:138.8px;width:3.8px;height:3.8px;--a:0.34"></i><i class="s" style="left:376.3px;top:475.4px;width:4.4px;height:4.4px;--a:0.38"></i><i class="s" style="left:426.6px;top:374.5px;width:4.4px;height:4.4px;--a:0.31"></i><i class="s" style="left:848.6px;top:561.1px;width:4.9px;height:4.9px;--a:0.39"></i><i class="s" style="left:270.3px;top:131.8px;width:4.1px;height:4.1px;--a:0.26"></i><i class="s" style="left:652.4px;top:227.2px;width:4.9px;height:4.9px;--a:0.33"></i><i class="s" style="left:815.5px;top:478.5px;width:3.7px;height:3.7px;--a:0.29"></i><i class="s" style="left:774.4px;top:266.1px;width:5.1px;height:5.1px;--a:0.33"></i><i class="s" style="left:64.5px;top:355.7px;width:4.8px;height:4.8px;--a:0.30"></i><i class="s" style="left:76.4px;top:189.1px;width:5.1px;height:5.1px;--a:0.40"></i><i class="s" style="left:103.1px;top:141.3px;width:3.9px;height:3.9px;--a:0.26"></i><i class="s" style="left:678.6px;top:102.4px;width:4.5px;height:4.5px;--a:0.34"></i><i class="s" style="left:164.7px;top:413.6px;width:3.9px;height:3.9px;--a:0.38"></i><i class="s" style="left:101.8px;top:239.0px;width:4.0px;height:4.0px;--a:0.30"></i><i class="s" style="left:826.3px;top:453.6px;width:4.2px;height:4.2px;--a:0.43"></i><i class="s" style="left:181.2px;top:223.7px;width:4.9px;height:4.9px;--a:0.38"></i><i class="s" style="left:88.1px;top:558.0px;width:4.0px;height:4.0px;--a:0.30"></i><i class="s" style="left:658.2px;top:187.5px;width:4.1px;height:4.1px;--a:0.26"></i><i class="s" style="left:79.4px;top:329.9px;width:4.1px;height:4.1px;--a:0.37"></i><i class="s" style="left:317.7px;top:256.7px;width:5.0px;height:5.0px;--a:0.35"></i><i class="s" style="left:490.2px;top:489.1px;width:4.0px;height:4.0px;--a:0.28"></i><i class="s" style="left:773.3px;top:461.7px;width:4.1px;height:4.1px;--a:0.29"></i><i class="s" style="left:630.0px;top:530.6px;width:4.0px;height:4.0px;--a:0.44"></i><i class="s" style="left:750.9px;top:341.4px;width:4.3px;height:4.3px;--a:0.27"></i><i class="s" style="left:35.8px;top:543.0px;width:4.1px;height:4.1px;--a:0.39"></i><i class="s" style="left:220.6px;top:464.8px;width:4.6px;height:4.6px;--a:0.31"></i><i class="s" style="left:151.9px;top:407.2px;width:3.8px;height:3.8px;--a:0.30"></i><i class="s" style="left:477.1px;top:480.9px;width:4.6px;height:4.6px;--a:0.31"></i><i class="s" style="left:781.0px;top:117.6px;width:3.8px;height:3.8px;--a:0.30"></i><i class="s" style="left:381.0px;top:36.9px;width:4.0px;height:4.0px;--a:0.32"></i><i class="s" style="left:488.1px;top:76.7px;width:4.2px;height:4.2px;--a:0.43"></i><i class="s" style="left:834.1px;top:371.2px;width:4.7px;height:4.7px;--a:0.37"></i><i class="s" style="left:122.1px;top:22.8px;width:3.8px;height:3.8px;--a:0.43"></i><i class="s" style="left:597.5px;top:543.2px;width:3.8px;height:3.8px;--a:0.38"></i><i class="s" style="left:411.8px;top:412.7px;width:4.2px;height:4.2px;--a:0.45"></i><i class="s" style="left:66.5px;top:309.0px;width:4.7px;height:4.7px;--a:0.43"></i><i class="s" style="left:627.6px;top:397.4px;width:4.8px;height:4.8px;--a:0.43"></i><i class="s" style="left:300.9px;top:386.9px;width:5.0px;height:5.0px;--a:0.42"></i><i class="s" style="left:356.3px;top:446.0px;width:4.9px;height:4.9px;--a:0.36"></i><i class="s" style="left:532.7px;top:217.2px;width:4.5px;height:4.5px;--a:0.37"></i><i class="s" style="left:70.5px;top:361.2px;width:5.1px;height:5.1px;--a:0.43"></i><i class="s" style="left:620.1px;top:220.5px;width:4.7px;height:4.7px;--a:0.37"></i><i class="s" style="left:376.6px;top:473.4px;width:3.9px;height:3.9px;--a:0.40"></i><i class="s" style="left:28.1px;top:340.1px;width:4.4px;height:4.4px;--a:0.30"></i><i class="s" style="left:594.9px;top:281.7px;width:4.6px;height:4.6px;--a:0.43"></i><i class="s" style="left:219.9px;top:9.3px;width:4.1px;height:4.1px;--a:0.39"></i><i class="s" style="left:174.3px;top:97.7px;width:5.0px;height:5.0px;--a:0.38"></i><i class="s" style="left:377.7px;top:503.2px;width:4.2px;height:4.2px;--a:0.38"></i><i class="s" style="left:170.9px;top:244.3px;width:4.8px;height:4.8px;--a:0.43"></i><i class="s" style="left:749.2px;top:218.4px;width:4.5px;height:4.5px;--a:0.31"></i><i class="s" style="left:118.0px;top:281.1px;width:4.9px;height:4.9px;--a:0.42"></i><i class="s" style="left:606.1px;top:535.9px;width:4.1px;height:4.1px;--a:0.28"></i><i class="s" style="left:385.1px;top:157.4px;width:4.0px;height:4.0px;--a:0.33"></i><i class="s" style="left:533.5px;top:280.0px;width:4.2px;height:4.2px;--a:0.42"></i><i class="s" style="left:835.8px;top:256.9px;width:3.8px;height:3.8px;--a:0.26"></i><i class="s" style="left:742.8px;top:25.9px;width:4.7px;height:4.7px;--a:0.36"></i><i class="s" style="left:265.2px;top:447.2px;width:3.8px;height:3.8px;--a:0.28"></i><i class="s" style="left:388.3px;top:16.4px;width:4.9px;height:4.9px;--a:0.30"></i><i class="s" style="left:122.2px;top:29.0px;width:4.6px;height:4.6px;--a:0.34"></i><i class="s" style="left:536.8px;top:370.1px;width:4.8px;height:4.8px;--a:0.44"></i><i class="s" style="left:583.3px;top:114.6px;width:4.4px;height:4.4px;--a:0.29"></i><i class="s" style="left:11.8px;top:267.5px;width:4.7px;height:4.7px;--a:0.29"></i><i class="s" style="left:233.6px;top:196.6px;width:4.7px;height:4.7px;--a:0.35"></i><i class="s" style="left:523.9px;top:427.1px;width:4.3px;height:4.3px;--a:0.41"></i></div><div class="a t" style="left:112px;top:7px;width:600px;text-align:center;font-weight:bold;font-size:13px;letter-spacing:0.7px;color:#d8d8d8">Gray 1:5 integration_G | &lt;*new*&gt;</div><div class="a" style="left:7px;top:6px;width:15px;height:15px;background:#d8d8ff;border:1px solid #8080c0"><div class="a" style="left:2px;top:4px;width:9px;height:7px;background:#6a6a6a"></div></div><div class="a" style="left:3px;top:26px;width:22px;height:98px;background:#515151;clip-path:polygon(0 22px,21px 0,100% 0,100% 100%,0 100%)"></div><div class="a" style="left:23px;top:27px;width:2px;height:96px;background:#00c060"></div><div class="a t" style="left:-46px;top:77.0px;width:120px;text-align:center;transform:rotate(-90deg);font-size:12px;color:#e8e8e8">integration_G</div><div class="a" style="left:804px;top:13px;width:10px;height:3px;background:#fff"></div><div class="a" style="left:825px;top:10px;width:10px;height:2px;background:#fff"></div><div class="a" style="left:825px;top:12px;width:0;height:0;border-left:5px solid transparent;border-right:5px solid transparent;border-bottom:7px solid #fff"></div><div class="a" style="left:846px;top:13px;width:10px;height:3px;background:#fff"></div><div class="a" style="left:849px;top:10px;width:3px;height:10px;background:#fff"></div><svg class="a" style="left:867px;top:9px" width="12" height="12"><path d="M1.5 1.5L10.5 10.5M10.5 1.5L1.5 10.5" stroke="#fff" stroke-width="2.2"/></svg><svg class="a" style="left:9px;top:530px" width="12" height="60"><g fill="none" stroke="#f0f0f0" stroke-width="1"><path d="M1 1L10 10M10 5V10H5"/><rect x="3.5" y="20.5" width="5" height="5"/><path d="M1 18L4 21M11 18L8 21M1 28L4 25M11 28L8 25"/><rect x="0.5" y="38.5" width="5" height="5"/><path d="M3.5 38.5V34.5H10.5V41.5H5.5"/><circle cx="6" cy="55" r="5"/><circle cx="6" cy="55" r="1" fill="#f0f0f0"/></g></svg></div><div class="a" style="left:26px;top:103px;width:886px;height:600px;background:#353535;z-index:5"><div class="a" style="left:1px;top:1px;width:884px;height:598px;background:#6e6e6e"></div><div class="a" style="left:883px;top:26px;width:2px;height:573px;background:#868686"></div><div class="a" style="left:25px;top:597px;width:860px;height:2px;background:#868686"></div><div class="a" style="left:25px;top:26px;width:858px;height:571px;overflow:hidden;background:#393939"><svg class="a" style="left:0;top:0" width="858" height="571"><filter id="nrgb" x="0" y="0" width="100%" height="100%" color-interpolation-filters="sRGB"><feTurbulence type="fractalNoise" baseFrequency="0.66" numOctaves="2" seed="7"/><feColorMatrix type="matrix" values="0.25 0 0 0 0.118  0.25 0 0 0 0.113  0.25 0 0 0 0.118  0 0 0 0 1"/></filter><rect width="858" height="571" filter="url(#nrgb)"/></svg><div class="a" style="left:0;top:0;width:858px;height:571px;transform-origin:374px 197px;transform:scale(1.08,1.05)"><svg class="a" style="left:174px;top:-3px;overflow:visible" width="400" height="400"><defs><filter id="bgrgb" x="-20%" y="-20%" width="140%" height="140%"><feGaussianBlur stdDeviation="7"/></filter><filter id="cgrgb" x="-50%" y="-50%" width="200%" height="200%"><feGaussianBlur stdDeviation="4"/></filter><radialGradient id="hgrgb"><stop offset="0" stop-color="rgba(180,200,165,0.85)"/><stop offset="0.2" stop-color="rgba(180,200,165,0.55)"/><stop offset="0.4" stop-color="rgba(180,200,165,0.28)"/><stop offset="0.65" stop-color="rgba(180,200,165,0.10)"/><stop offset="1" stop-color="rgba(180,200,165,0)"/></radialGradient><radialGradient id="mgrgb"><stop offset="0" stop-color="rgba(180,200,165,0.20)"/><stop offset="0.6" stop-color="rgba(180,200,165,0.10)"/><stop offset="1" stop-color="rgba(180,200,165,0)"/></radialGradient><radialGradient id="kgrgb"><stop offset="0" stop-color="rgba(180,200,165,0.9)"/><stop offset="0.12" stop-color="rgba(180,200,165,0.55)"/><stop offset="0.4" stop-color="rgba(180,200,165,0.18)"/><stop offset="1" stop-color="rgba(180,200,165,0)"/></radialGradient></defs><circle cx="200" cy="200" r="175" fill="url(#hgrgb)"/><g filter="url(#bgrgb)"><path d="M190,197 Q190,197 185.0,194.5 Q180,192 173.0,186.5 Q166,181 165.5,175.0 Q165,169 171.5,164.0 Q178,159 188.5,154.5 Q199,150 212.5,148.5 Q226,147 239.0,148.5 Q252,150 265.0,152.5 Q278,155 291.5,159.5 L305,164" fill="none" stroke="rgba(180,200,165,0.26)" stroke-width="16" stroke-linecap="round" stroke-linejoin="round"/><path d="M210,204 Q210,204 220.0,205.0 Q230,206 246.0,205.5 Q262,205 265.0,214.5 Q268,224 263.0,237.0 Q258,250 248.0,255.5 Q238,261 223.5,261.5 Q209,262 195.5,260.0 Q182,258 171.5,252.0 Q161,246 156.5,236.0 L152,226" fill="none" stroke="rgba(180,200,165,0.26)" stroke-width="16" stroke-linecap="round" stroke-linejoin="round"/><path d="M255,255 Q255,255 254.5,267.5 Q254,280 247.0,289.0 Q240,298 230.0,303.0 L220,308" fill="none" stroke="rgba(180,200,165,0.22)" stroke-width="14" stroke-linecap="round" stroke-linejoin="round"/><path d="M150,150 Q150,150 147.5,138.0 Q145,126 135.0,115.5 Q125,105 107.5,105.0 Q90,105 75.0,112.5 L60,120" fill="none" stroke="rgba(180,200,165,0.19)" stroke-width="14" stroke-linecap="round" stroke-linejoin="round"/><path d="M152,226 Q152,226 146.0,213.0 Q140,200 139.0,185.0 Q138,170 144.0,160.0 L150,150" fill="none" stroke="rgba(180,200,165,0.16)" stroke-width="12" stroke-linecap="round" stroke-linejoin="round"/><path d="M60,120 Q60,120 50.0,140.0 Q40,160 37.5,180.0 Q35,200 42.5,222.5 Q50,245 65.0,262.5 L80,280" fill="none" stroke="rgba(180,200,165,0.12)" stroke-width="16" stroke-linecap="round" stroke-linejoin="round"/><path d="M305,164 Q305,164 313.5,179.5 Q322,195 325.0,210.0 Q328,225 321.5,242.5 L315,260" fill="none" stroke="rgba(180,200,165,0.14)" stroke-width="14" stroke-linecap="round" stroke-linejoin="round"/></g><g filter="url(#cgrgb)"><path d="M190,197 Q190,197 185.0,194.5 Q180,192 173.0,186.5 Q166,181 165.5,175.0 Q165,169 171.5,164.0 Q178,159 188.5,154.5 Q199,150 212.5,148.5 Q226,147 239.0,148.5 Q252,150 265.0,152.5 Q278,155 291.5,159.5 L305,164" fill="none" stroke="rgba(180,200,165,0.09)" stroke-width="6" stroke-linecap="round" stroke-linejoin="round"/><path d="M210,204 Q210,204 220.0,205.0 Q230,206 246.0,205.5 Q262,205 265.0,214.5 Q268,224 263.0,237.0 Q258,250 248.0,255.5 Q238,261 223.5,261.5 Q209,262 195.5,260.0 Q182,258 171.5,252.0 Q161,246 156.5,236.0 L152,226" fill="none" stroke="rgba(180,200,165,0.09)" stroke-width="6" stroke-linecap="round" stroke-linejoin="round"/></g><g filter="url(#cgrgb)"><ellipse cx="59" cy="120" rx="4" ry="9" transform="rotate(25 59 120)" fill="rgba(180,200,165,0.62)"/><ellipse cx="329" cy="214" rx="4" ry="9" transform="rotate(-30 329 214)" fill="rgba(180,200,165,0.55)"/></g><circle cx="200" cy="200" r="65" fill="url(#mgrgb)"/><circle cx="200" cy="200" r="32" fill="url(#kgrgb)"/></svg></div><i class="s" style="left:109.8px;top:47.8px;width:4.4px;height:4.4px;--a:0.92;--c:250,246,225"></i><i class="s" style="left:265.6px;top:5.6px;width:4.9px;height:4.9px;--a:0.92;--c:250,246,225"></i><i class="s" style="left:257.8px;top:19.8px;width:4.4px;height:4.4px;--a:0.92;--c:250,246,225"></i><i class="s" style="left:354.6px;top:74.6px;width:4.9px;height:4.9px;--a:0.92;--c:250,246,225"></i><i class="s" style="left:344.8px;top:81.8px;width:4.4px;height:4.4px;--a:0.92;--c:250,246,225"></i><i class="s" style="left:402.8px;top:98.8px;width:4.4px;height:4.4px;--a:0.92;--c:250,246,225"></i><i class="s" style="left:413.8px;top:102.8px;width:4.4px;height:4.4px;--a:0.92;--c:250,246,225"></i><i class="s" style="left:346.6px;top:126.6px;width:4.9px;height:4.9px;--a:0.92;--c:250,246,225"></i><i class="s" style="left:318.6px;top:112.6px;width:4.9px;height:4.9px;--a:0.92;--c:250,246,225"></i><i class="s" style="left:102.8px;top:2.8px;width:4.4px;height:4.4px;--a:0.92;--c:250,246,225"></i><i class="s" style="left:221.9px;top:29.9px;width:6.1px;height:6.1px;--a:0.92;--c:250,246,225"></i><i class="s" style="left:231.3px;top:58.3px;width:7.3px;height:7.3px;--a:0.92;--c:250,246,225"></i><i class="s" style="left:256.9px;top:74.9px;width:6.1px;height:6.1px;--a:0.92;--c:250,246,225"></i><i class="s" style="left:105.3px;top:110.3px;width:7.3px;height:7.3px;--a:0.92;--c:250,246,225"></i><i class="s" style="left:119.7px;top:113.7px;width:8.6px;height:8.6px;--a:0.92;--c:250,246,225"></i><i class="s" style="left:230.3px;top:120.3px;width:7.3px;height:7.3px;--a:0.92;--c:250,246,225"></i><i class="s" style="left:307.3px;top:107.3px;width:7.3px;height:7.3px;--a:0.92;--c:250,246,225"></i><i class="s" style="left:369.3px;top:87.3px;width:7.3px;height:7.3px;--a:0.92;--c:250,246,225"></i><i class="s" style="left:396.3px;top:83.3px;width:7.3px;height:7.3px;--a:0.92;--c:250,246,225"></i><i class="s" style="left:328.3px;top:61.3px;width:7.3px;height:7.3px;--a:0.92;--c:250,246,225"></i><i class="s" style="left:400.9px;top:60.9px;width:6.1px;height:6.1px;--a:0.92;--c:250,246,225"></i><i class="s" style="left:283.6px;top:13.6px;width:4.9px;height:4.9px;--a:0.92;--c:250,246,225"></i><i class="s" style="left:289.6px;top:17.6px;width:4.9px;height:4.9px;--a:0.92;--c:250,246,225"></i><i class="s" style="left:528.3px;top:32.3px;width:7.3px;height:7.3px;--a:0.92;--c:250,246,225"></i><i class="s" style="left:470.3px;top:94.3px;width:7.3px;height:7.3px;--a:0.92;--c:250,246,225"></i><i class="s" style="left:744.3px;top:4.3px;width:7.3px;height:7.3px;--a:0.92;--c:250,246,225"></i><i class="s" style="left:808.9px;top:30.9px;width:6.1px;height:6.1px;--a:0.92;--c:250,246,225"></i><i class="s" style="left:816.9px;top:101.9px;width:6.1px;height:6.1px;--a:0.92;--c:250,246,225"></i><i class="s" style="left:809.9px;top:110.9px;width:6.1px;height:6.1px;--a:0.92;--c:250,246,225"></i><i class="s" style="left:613.6px;top:74.6px;width:4.9px;height:4.9px;--a:0.92;--c:250,246,225"></i><i class="s" style="left:771.6px;top:56.6px;width:4.9px;height:4.9px;--a:0.92;--c:250,246,225"></i><i class="s" style="left:831.3px;top:129.3px;width:7.3px;height:7.3px;--a:0.92;--c:250,246,225"></i><i class="s" style="left:9.3px;top:169.3px;width:7.3px;height:7.3px;--a:0.92;--c:250,246,225"></i><i class="s" style="left:33.9px;top:216.9px;width:6.1px;height:6.1px;--a:0.92;--c:250,246,225"></i><i class="s" style="left:24.7px;top:235.7px;width:14.7px;height:14.7px;--a:0.92;--c:250,246,225"></i><i class="s" style="left:110.3px;top:261.3px;width:7.3px;height:7.3px;--a:0.92;--c:250,246,225"></i><i class="s" style="left:5.9px;top:312.9px;width:6.1px;height:6.1px;--a:0.92;--c:250,246,225"></i><i class="s" style="left:24.9px;top:347.9px;width:6.1px;height:6.1px;--a:0.92;--c:250,246,225"></i><i class="s" style="left:98.9px;top:359.9px;width:6.1px;height:6.1px;--a:0.92;--c:250,246,225"></i><i class="s" style="left:88.9px;top:402.9px;width:6.1px;height:6.1px;--a:0.92;--c:250,246,225"></i><i class="s" style="left:128.3px;top:433.3px;width:7.3px;height:7.3px;--a:0.92;--c:250,246,225"></i><i class="s" style="left:86.9px;top:488.9px;width:6.1px;height:6.1px;--a:0.92;--c:250,246,225"></i><i class="s" style="left:74.7px;top:538.7px;width:8.6px;height:8.6px;--a:0.92;--c:250,246,225"></i><i class="s" style="left:109.6px;top:154.6px;width:4.9px;height:4.9px;--a:0.92;--c:250,246,225"></i><i class="s" style="left:530.7px;top:102.6px;width:5.1px;height:5.1px;--a:0.46;--c:250,240,220"></i><i class="s" style="left:451.9px;top:115.9px;width:5.1px;height:5.1px;--a:0.46;--c:240,210,150"></i><i class="s" style="left:766.7px;top:18.0px;width:4.5px;height:4.5px;--a:0.40;--c:240,210,150"></i><i class="s" style="left:89.0px;top:36.2px;width:5.0px;height:5.0px;--a:0.37;--c:220,235,200"></i><i class="s" style="left:780.1px;top:106.4px;width:4.0px;height:4.0px;--a:0.33;--c:240,210,150"></i><i class="s" style="left:526.7px;top:20.2px;width:3.7px;height:3.7px;--a:0.35;--c:240,210,150"></i><i class="s" style="left:185.1px;top:135.0px;width:5.2px;height:5.2px;--a:0.38;--c:220,235,200"></i><i class="s" style="left:171.3px;top:120.9px;width:4.8px;height:4.8px;--a:0.54;--c:240,210,150"></i><i class="s" style="left:588.0px;top:132.9px;width:5.3px;height:5.3px;--a:0.31;--c:220,235,200"></i><i class="s" style="left:354.7px;top:129.2px;width:4.2px;height:4.2px;--a:0.38;--c:220,235,200"></i><i class="s" style="left:514.0px;top:3.0px;width:4.9px;height:4.9px;--a:0.32;--c:220,235,200"></i><i class="s" style="left:303.9px;top:43.9px;width:4.9px;height:4.9px;--a:0.42;--c:240,210,150"></i><i class="s" style="left:599.9px;top:10.0px;width:5.4px;height:5.4px;--a:0.54;--c:240,210,150"></i><i class="s" style="left:305.9px;top:57.2px;width:4.7px;height:4.7px;--a:0.39;--c:220,235,200"></i><i class="s" style="left:493.7px;top:4.3px;width:3.8px;height:3.8px;--a:0.46;--c:240,210,150"></i><i class="s" style="left:812.2px;top:19.0px;width:4.2px;height:4.2px;--a:0.39;--c:220,235,200"></i><i class="s" style="left:303.3px;top:73.3px;width:5.1px;height:5.1px;--a:0.45;--c:240,210,150"></i><i class="s" style="left:665.2px;top:52.5px;width:4.2px;height:4.2px;--a:0.54;--c:220,235,200"></i><i class="s" style="left:79.9px;top:48.6px;width:4.8px;height:4.8px;--a:0.38;--c:240,210,150"></i><i class="s" style="left:786.6px;top:76.5px;width:4.3px;height:4.3px;--a:0.38;--c:220,235,200"></i><i class="s" style="left:679.9px;top:87.1px;width:5.0px;height:5.0px;--a:0.55;--c:220,235,200"></i><i class="s" style="left:139.3px;top:8.8px;width:5.4px;height:5.4px;--a:0.53;--c:250,240,220"></i><i class="s" style="left:29.8px;top:102.8px;width:4.3px;height:4.3px;--a:0.41;--c:220,235,200"></i><i class="s" style="left:360.0px;top:9.9px;width:5.3px;height:5.3px;--a:0.50;--c:240,210,150"></i><i class="s" style="left:285.7px;top:30.2px;width:5.4px;height:5.4px;--a:0.54;--c:250,240,220"></i><i class="s" style="left:537.6px;top:109.4px;width:3.9px;height:3.9px;--a:0.39;--c:220,235,200"></i><i class="s" style="left:52.8px;top:59.8px;width:4.0px;height:4.0px;--a:0.51;--c:250,240,220"></i><i class="s" style="left:830.4px;top:63.9px;width:4.6px;height:4.6px;--a:0.38;--c:250,240,220"></i><i class="s" style="left:234.7px;top:65.8px;width:5.3px;height:5.3px;--a:0.39;--c:240,210,150"></i><i class="s" style="left:840.7px;top:132.2px;width:4.8px;height:4.8px;--a:0.52;--c:220,235,200"></i><i class="s" style="left:155.4px;top:69.1px;width:4.6px;height:4.6px;--a:0.52;--c:250,240,220"></i><i class="s" style="left:308.9px;top:108.6px;width:5.1px;height:5.1px;--a:0.45;--c:250,240,220"></i><i class="s" style="left:31.8px;top:43.9px;width:4.7px;height:4.7px;--a:0.37;--c:250,240,220"></i><i class="s" style="left:414.4px;top:106.5px;width:4.9px;height:4.9px;--a:0.54;--c:220,235,200"></i><i class="s" style="left:290.8px;top:26.5px;width:5.2px;height:5.2px;--a:0.44;--c:220,235,200"></i><i class="s" style="left:215.3px;top:93.4px;width:4.5px;height:4.5px;--a:0.46;--c:250,240,220"></i><i class="s" style="left:679.0px;top:49.5px;width:4.8px;height:4.8px;--a:0.53;--c:250,240,220"></i><i class="s" style="left:349.4px;top:127.5px;width:4.0px;height:4.0px;--a:0.41;--c:250,240,220"></i><i class="s" style="left:311.9px;top:48.1px;width:4.0px;height:4.0px;--a:0.35;--c:240,210,150"></i><i class="s" style="left:309.9px;top:118.2px;width:4.2px;height:4.2px;--a:0.48;--c:240,210,150"></i><i class="s" style="left:621.8px;top:25.7px;width:5.1px;height:5.1px;--a:0.43;--c:250,240,220"></i><i class="s" style="left:796.8px;top:43.5px;width:4.7px;height:4.7px;--a:0.37;--c:250,240,220"></i><i class="s" style="left:847.3px;top:29.0px;width:4.7px;height:4.7px;--a:0.46;--c:250,240,220"></i><i class="s" style="left:188.3px;top:95.2px;width:4.8px;height:4.8px;--a:0.55;--c:240,210,150"></i><i class="s" style="left:833.2px;top:24.7px;width:5.3px;height:5.3px;--a:0.38;--c:240,210,150"></i><i class="s" style="left:26.7px;top:220.5px;width:3.8px;height:3.8px;--a:0.39;--c:220,235,200"></i><i class="s" style="left:89.1px;top:168.6px;width:4.1px;height:4.1px;--a:0.53;--c:250,240,220"></i><i class="s" style="left:3.0px;top:310.6px;width:4.2px;height:4.2px;--a:0.52;--c:220,235,200"></i><i class="s" style="left:91.9px;top:370.4px;width:5.4px;height:5.4px;--a:0.45;--c:250,240,220"></i><i class="s" style="left:15.2px;top:370.1px;width:4.3px;height:4.3px;--a:0.37;--c:250,240,220"></i><i class="s" style="left:48.5px;top:192.8px;width:4.4px;height:4.4px;--a:0.46;--c:250,240,220"></i><i class="s" style="left:50.7px;top:198.2px;width:4.8px;height:4.8px;--a:0.42;--c:250,240,220"></i><i class="s" style="left:28.9px;top:194.7px;width:3.9px;height:3.9px;--a:0.30;--c:250,240,220"></i><i class="s" style="left:16.6px;top:378.6px;width:4.8px;height:4.8px;--a:0.38;--c:240,210,150"></i><i class="s" style="left:116.7px;top:378.2px;width:4.5px;height:4.5px;--a:0.42;--c:240,210,150"></i><i class="s" style="left:65.1px;top:439.5px;width:4.4px;height:4.4px;--a:0.45;--c:240,210,150"></i><i class="s" style="left:36.5px;top:555.6px;width:4.6px;height:4.6px;--a:0.30;--c:220,235,200"></i><i class="s" style="left:125.2px;top:268.3px;width:5.3px;height:5.3px;--a:0.42;--c:240,210,150"></i><i class="s" style="left:18.6px;top:402.6px;width:4.5px;height:4.5px;--a:0.31;--c:220,235,200"></i><i class="s" style="left:20.5px;top:304.9px;width:4.6px;height:4.6px;--a:0.37;--c:250,240,220"></i><i class="s" style="left:124.5px;top:471.0px;width:4.2px;height:4.2px;--a:0.51;--c:220,235,200"></i><i class="s" style="left:96.5px;top:259.4px;width:4.6px;height:4.6px;--a:0.43;--c:220,235,200"></i><i class="s" style="left:114.6px;top:512.5px;width:5.3px;height:5.3px;--a:0.49;--c:240,210,150"></i><i class="s" style="left:41.9px;top:365.1px;width:4.3px;height:4.3px;--a:0.48;--c:220,235,200"></i><i class="s" style="left:6.0px;top:286.6px;width:4.9px;height:4.9px;--a:0.33;--c:250,240,220"></i><i class="s" style="left:2.9px;top:373.2px;width:4.9px;height:4.9px;--a:0.52;--c:240,210,150"></i><i class="s" style="left:73.4px;top:143.7px;width:5.1px;height:5.1px;--a:0.45;--c:220,235,200"></i><i class="s" style="left:92.2px;top:543.7px;width:4.8px;height:4.8px;--a:0.42;--c:220,235,200"></i><i class="s" style="left:91.1px;top:443.9px;width:5.3px;height:5.3px;--a:0.51;--c:220,235,200"></i><i class="s" style="left:11.1px;top:493.8px;width:4.9px;height:4.9px;--a:0.45;--c:220,235,200"></i></div><div class="a t" style="left:112px;top:7px;width:600px;text-align:center;font-weight:bold;font-size:13px;letter-spacing:0.7px;color:#d8d8d8">RGB 1:5 integration | &lt;*new*&gt;</div><div class="a" style="left:7px;top:6px;width:15px;height:15px;background:#d8d8ff;border:1px solid #8080c0"><div class="a" style="left:2px;top:4px;width:9px;height:7px;background:#6a6a6a"></div></div><div class="a" style="left:3px;top:26px;width:22px;height:84px;background:#515151;clip-path:polygon(0 22px,21px 0,100% 0,100% 100%,0 100%)"></div><div class="a" style="left:23px;top:27px;width:2px;height:82px;background:#00c060"></div><div class="a t" style="left:-46px;top:70.0px;width:120px;text-align:center;transform:rotate(-90deg);font-size:12px;color:#e8e8e8">integration</div><div class="a" style="left:804px;top:13px;width:10px;height:3px;background:#fff"></div><div class="a" style="left:825px;top:10px;width:10px;height:2px;background:#fff"></div><div class="a" style="left:825px;top:12px;width:0;height:0;border-left:5px solid transparent;border-right:5px solid transparent;border-bottom:7px solid #fff"></div><div class="a" style="left:846px;top:13px;width:10px;height:3px;background:#fff"></div><div class="a" style="left:849px;top:10px;width:3px;height:10px;background:#fff"></div><svg class="a" style="left:867px;top:9px" width="12" height="12"><path d="M1.5 1.5L10.5 10.5M10.5 1.5L1.5 10.5" stroke="#fff" stroke-width="2.2"/></svg><svg class="a" style="left:9px;top:530px" width="12" height="60"><g fill="none" stroke="#f0f0f0" stroke-width="1"><path d="M1 1L10 10M10 5V10H5"/><rect x="3.5" y="20.5" width="5" height="5"/><path d="M1 18L4 21M11 18L8 21M1 28L4 25M11 28L8 25"/><rect x="0.5" y="38.5" width="5" height="5"/><path d="M3.5 38.5V34.5H10.5V41.5H5.5"/><circle cx="6" cy="55" r="5"/><circle cx="6" cy="55" r="1" fill="#f0f0f0"/></g></svg></div><div class="a" style="left:186px;top:263px;width:886px;height:600px;background:#353535;z-index:6"><div class="a" style="left:1px;top:1px;width:884px;height:598px;background:#6e6e6e"></div><div class="a" style="left:883px;top:26px;width:2px;height:573px;background:#868686"></div><div class="a" style="left:25px;top:597px;width:860px;height:2px;background:#868686"></div><div class="a" style="left:25px;top:26px;width:858px;height:571px;overflow:hidden;background:#393939"><svg class="a" style="left:0;top:0" width="858" height="571"><filter id="nw2" x="0" y="0" width="100%" height="100%" color-interpolation-filters="sRGB"><feTurbulence type="fractalNoise" baseFrequency="0.66" numOctaves="2" seed="42"/><feColorMatrix type="matrix" values="0.32 0 0 0 0.075  0.32 0 0 0 0.075  0.32 0 0 0 0.075  0 0 0 0 1"/></filter><rect width="858" height="571" filter="url(#nw2)"/></svg><svg class="a" style="left:174px;top:3px;overflow:visible" width="400" height="400"><defs><filter id="bnw2" x="-20%" y="-20%" width="140%" height="140%"><feGaussianBlur stdDeviation="7"/></filter><filter id="cnw2" x="-50%" y="-50%" width="200%" height="200%"><feGaussianBlur stdDeviation="4"/></filter><radialGradient id="hnw2"><stop offset="0" stop-color="rgba(255,255,255,0.34)"/><stop offset="0.2" stop-color="rgba(255,255,255,0.22)"/><stop offset="0.4" stop-color="rgba(255,255,255,0.11)"/><stop offset="0.65" stop-color="rgba(255,255,255,0.04)"/><stop offset="1" stop-color="rgba(255,255,255,0)"/></radialGradient><radialGradient id="mnw2"><stop offset="0" stop-color="rgba(255,255,255,0.08)"/><stop offset="0.6" stop-color="rgba(255,255,255,0.04)"/><stop offset="1" stop-color="rgba(255,255,255,0)"/></radialGradient><radialGradient id="knw2"><stop offset="0" stop-color="rgba(255,255,255,0.9)"/><stop offset="0.12" stop-color="rgba(255,255,255,0.55)"/><stop offset="0.4" stop-color="rgba(255,255,255,0.18)"/><stop offset="1" stop-color="rgba(255,255,255,0)"/></radialGradient></defs><circle cx="200" cy="200" r="175" fill="url(#hnw2)"/><g filter="url(#bnw2)"><path d="M190,197 Q190,197 185.0,194.5 Q180,192 173.0,186.5 Q166,181 165.5,175.0 Q165,169 171.5,164.0 Q178,159 188.5,154.5 Q199,150 212.5,148.5 Q226,147 239.0,148.5 Q252,150 265.0,152.5 Q278,155 291.5,159.5 L305,164" fill="none" stroke="rgba(255,255,255,0.10)" stroke-width="16" stroke-linecap="round" stroke-linejoin="round"/><path d="M210,204 Q210,204 220.0,205.0 Q230,206 246.0,205.5 Q262,205 265.0,214.5 Q268,224 263.0,237.0 Q258,250 248.0,255.5 Q238,261 223.5,261.5 Q209,262 195.5,260.0 Q182,258 171.5,252.0 Q161,246 156.5,236.0 L152,226" fill="none" stroke="rgba(255,255,255,0.10)" stroke-width="16" stroke-linecap="round" stroke-linejoin="round"/><path d="M255,255 Q255,255 254.5,267.5 Q254,280 247.0,289.0 Q240,298 230.0,303.0 L220,308" fill="none" stroke="rgba(255,255,255,0.09)" stroke-width="14" stroke-linecap="round" stroke-linejoin="round"/><path d="M150,150 Q150,150 147.5,138.0 Q145,126 135.0,115.5 Q125,105 107.5,105.0 Q90,105 75.0,112.5 L60,120" fill="none" stroke="rgba(255,255,255,0.07)" stroke-width="14" stroke-linecap="round" stroke-linejoin="round"/><path d="M152,226 Q152,226 146.0,213.0 Q140,200 139.0,185.0 Q138,170 144.0,160.0 L150,150" fill="none" stroke="rgba(255,255,255,0.07)" stroke-width="12" stroke-linecap="round" stroke-linejoin="round"/><path d="M60,120 Q60,120 50.0,140.0 Q40,160 37.5,180.0 Q35,200 42.5,222.5 Q50,245 65.0,262.5 L80,280" fill="none" stroke="rgba(255,255,255,0.05)" stroke-width="16" stroke-linecap="round" stroke-linejoin="round"/><path d="M305,164 Q305,164 313.5,179.5 Q322,195 325.0,210.0 Q328,225 321.5,242.5 L315,260" fill="none" stroke="rgba(255,255,255,0.06)" stroke-width="14" stroke-linecap="round" stroke-linejoin="round"/></g><g filter="url(#cnw2)"><path d="M190,197 Q190,197 185.0,194.5 Q180,192 173.0,186.5 Q166,181 165.5,175.0 Q165,169 171.5,164.0 Q178,159 188.5,154.5 Q199,150 212.5,148.5 Q226,147 239.0,148.5 Q252,150 265.0,152.5 Q278,155 291.5,159.5 L305,164" fill="none" stroke="rgba(255,255,255,0.04)" stroke-width="6" stroke-linecap="round" stroke-linejoin="round"/><path d="M210,204 Q210,204 220.0,205.0 Q230,206 246.0,205.5 Q262,205 265.0,214.5 Q268,224 263.0,237.0 Q258,250 248.0,255.5 Q238,261 223.5,261.5 Q209,262 195.5,260.0 Q182,258 171.5,252.0 Q161,246 156.5,236.0 L152,226" fill="none" stroke="rgba(255,255,255,0.04)" stroke-width="6" stroke-linecap="round" stroke-linejoin="round"/></g><g filter="url(#cnw2)"><ellipse cx="59" cy="120" rx="4" ry="9" transform="rotate(25 59 120)" fill="rgba(255,255,255,0.25)"/><ellipse cx="329" cy="214" rx="4" ry="9" transform="rotate(-30 329 214)" fill="rgba(255,255,255,0.22)"/></g><circle cx="200" cy="200" r="65" fill="url(#mnw2)"/><circle cx="200" cy="200" r="32" fill="url(#knw2)"/></svg><i class="s" style="left:24.8px;top:235.8px;width:14.4px;height:14.4px;--a:1.00"></i><i class="s" style="left:827.5px;top:129.5px;width:13.0px;height:13.0px;--a:1.00"></i><i class="s" style="left:189.2px;top:441.2px;width:11.6px;height:11.6px;--a:1.00"></i><i class="s" style="left:73.2px;top:537.2px;width:11.6px;height:11.6px;--a:1.00"></i><i class="s" style="left:739.9px;top:413.9px;width:10.1px;height:10.1px;--a:1.00"></i><i class="s" style="left:753.9px;top:510.9px;width:10.1px;height:10.1px;--a:1.00"></i><i class="s" style="left:792.9px;top:510.9px;width:10.1px;height:10.1px;--a:1.00"></i><i class="s" style="left:126.9px;top:431.9px;width:10.1px;height:10.1px;--a:1.00"></i><i class="s" style="left:9.4px;top:170.4px;width:7.1px;height:7.1px;--a:0.95"></i><i class="s" style="left:120.4px;top:114.4px;width:7.1px;height:7.1px;--a:0.95"></i><i class="s" style="left:146.4px;top:208.4px;width:7.1px;height:7.1px;--a:0.95"></i><i class="s" style="left:221.4px;top:29.4px;width:7.1px;height:7.1px;--a:0.95"></i><i class="s" style="left:231.4px;top:58.4px;width:7.1px;height:7.1px;--a:0.95"></i><i class="s" style="left:229.4px;top:120.4px;width:7.1px;height:7.1px;--a:0.95"></i><i class="s" style="left:302.4px;top:232.4px;width:7.1px;height:7.1px;--a:0.95"></i><i class="s" style="left:307.4px;top:107.4px;width:7.1px;height:7.1px;--a:0.95"></i><i class="s" style="left:368.4px;top:87.4px;width:7.1px;height:7.1px;--a:0.95"></i><i class="s" style="left:396.4px;top:83.4px;width:7.1px;height:7.1px;--a:0.95"></i><i class="s" style="left:378.4px;top:229.4px;width:7.1px;height:7.1px;--a:0.95"></i><i class="s" style="left:529.4px;top:32.4px;width:7.1px;height:7.1px;--a:0.95"></i><i class="s" style="left:470.4px;top:95.4px;width:7.1px;height:7.1px;--a:0.95"></i><i class="s" style="left:528.4px;top:136.4px;width:7.1px;height:7.1px;--a:0.95"></i><i class="s" style="left:589.4px;top:157.4px;width:7.1px;height:7.1px;--a:0.95"></i><i class="s" style="left:719.4px;top:172.4px;width:7.1px;height:7.1px;--a:0.95"></i><i class="s" style="left:656.4px;top:192.4px;width:7.1px;height:7.1px;--a:0.95"></i><i class="s" style="left:589.4px;top:245.4px;width:7.1px;height:7.1px;--a:0.95"></i><i class="s" style="left:816.4px;top:101.4px;width:7.1px;height:7.1px;--a:0.95"></i><i class="s" style="left:160.4px;top:452.4px;width:7.1px;height:7.1px;--a:0.95"></i><i class="s" style="left:85.4px;top:489.4px;width:7.1px;height:7.1px;--a:0.95"></i><i class="s" style="left:208.4px;top:341.4px;width:7.1px;height:7.1px;--a:0.95"></i><i class="s" style="left:295.4px;top:372.4px;width:7.1px;height:7.1px;--a:0.95"></i><i class="s" style="left:388.4px;top:344.4px;width:7.1px;height:7.1px;--a:0.95"></i><i class="s" style="left:309.4px;top:462.4px;width:7.1px;height:7.1px;--a:0.95"></i><i class="s" style="left:337.4px;top:521.4px;width:7.1px;height:7.1px;--a:0.95"></i><i class="s" style="left:578.4px;top:297.4px;width:7.1px;height:7.1px;--a:0.95"></i><i class="s" style="left:448.4px;top:314.4px;width:7.1px;height:7.1px;--a:0.95"></i><i class="s" style="left:672.4px;top:372.4px;width:7.1px;height:7.1px;--a:0.95"></i><i class="s" style="left:604.4px;top:399.4px;width:7.1px;height:7.1px;--a:0.95"></i><i class="s" style="left:648.4px;top:415.4px;width:7.1px;height:7.1px;--a:0.95"></i><i class="s" style="left:846.4px;top:405.4px;width:7.1px;height:7.1px;--a:0.95"></i><i class="s" style="left:430.4px;top:437.4px;width:7.1px;height:7.1px;--a:0.95"></i><i class="s" style="left:449.4px;top:479.4px;width:7.1px;height:7.1px;--a:0.95"></i><i class="s" style="left:800.4px;top:313.4px;width:7.1px;height:7.1px;--a:0.95"></i><i class="s" style="left:503.4px;top:551.4px;width:7.1px;height:7.1px;--a:0.95"></i><i class="s" style="left:521.4px;top:560.4px;width:7.1px;height:7.1px;--a:0.95"></i><i class="s" style="left:627.4px;top:554.4px;width:7.1px;height:7.1px;--a:0.95"></i><i class="s" style="left:110.4px;top:261.4px;width:7.1px;height:7.1px;--a:0.95"></i><i class="s" style="left:145.4px;top:263.4px;width:7.1px;height:7.1px;--a:0.95"></i><i class="s" style="left:744.4px;top:4.4px;width:7.1px;height:7.1px;--a:0.95"></i><i class="s" style="left:705.5px;top:340.4px;width:5.1px;height:5.1px;--a:0.60"></i><i class="s" style="left:776.5px;top:283.4px;width:5.1px;height:5.1px;--a:0.60"></i><i class="s" style="left:779.5px;top:451.4px;width:5.1px;height:5.1px;--a:0.60"></i><i class="s" style="left:685.5px;top:553.5px;width:5.1px;height:5.1px;--a:0.60"></i><i class="s" style="left:747.5px;top:551.5px;width:5.1px;height:5.1px;--a:0.60"></i><i class="s" style="left:318.4px;top:111.5px;width:5.1px;height:5.1px;--a:0.60"></i><i class="s" style="left:346.4px;top:127.5px;width:5.1px;height:5.1px;--a:0.60"></i><i class="s" style="left:478.4px;top:127.5px;width:5.1px;height:5.1px;--a:0.60"></i><i class="s" style="left:447.4px;top:200.4px;width:5.1px;height:5.1px;--a:0.60"></i><i class="s" style="left:431.4px;top:206.4px;width:5.1px;height:5.1px;--a:0.60"></i><i class="s" style="left:390.4px;top:200.4px;width:5.1px;height:5.1px;--a:0.60"></i><i class="s" style="left:278.4px;top:241.4px;width:5.1px;height:5.1px;--a:0.60"></i><i class="s" style="left:317.4px;top:237.4px;width:5.1px;height:5.1px;--a:0.60"></i><i class="s" style="left:300.4px;top:217.4px;width:5.1px;height:5.1px;--a:0.60"></i><i class="s" style="left:414.4px;top:240.4px;width:5.1px;height:5.1px;--a:0.60"></i><i class="s" style="left:462.4px;top:254.4px;width:5.1px;height:5.1px;--a:0.60"></i><i class="s" style="left:367.4px;top:266.4px;width:5.1px;height:5.1px;--a:0.60"></i><i class="s" style="left:494.4px;top:290.4px;width:5.1px;height:5.1px;--a:0.60"></i><i class="s" style="left:313.4px;top:283.4px;width:5.1px;height:5.1px;--a:0.60"></i><i class="s" style="left:345.4px;top:81.5px;width:5.1px;height:5.1px;--a:0.60"></i><i class="s" style="left:34.5px;top:217.4px;width:5.1px;height:5.1px;--a:0.60"></i><i class="s" style="left:106.5px;top:111.5px;width:5.1px;height:5.1px;--a:0.60"></i><i class="s" style="left:109.5px;top:155.4px;width:5.1px;height:5.1px;--a:0.60"></i><i class="s" style="left:256.4px;top:75.5px;width:5.1px;height:5.1px;--a:0.60"></i><i class="s" style="left:181.4px;top:146.4px;width:5.1px;height:5.1px;--a:0.60"></i><i class="s" style="left:254.4px;top:163.4px;width:5.1px;height:5.1px;--a:0.60"></i><i class="s" style="left:236.4px;top:219.4px;width:5.1px;height:5.1px;--a:0.60"></i><i class="s" style="left:290.4px;top:234.4px;width:5.1px;height:5.1px;--a:0.60"></i><i class="s" style="left:328.4px;top:62.5px;width:5.1px;height:5.1px;--a:0.60"></i><i class="s" style="left:400.4px;top:61.5px;width:5.1px;height:5.1px;--a:0.60"></i><i class="s" style="left:282.4px;top:13.4px;width:5.1px;height:5.1px;--a:0.60"></i><i class="s" style="left:290.4px;top:17.4px;width:5.1px;height:5.1px;--a:0.60"></i><i class="s" style="left:102.5px;top:1.5px;width:5.1px;height:5.1px;--a:0.60"></i><i class="s" style="left:809.5px;top:31.4px;width:5.1px;height:5.1px;--a:0.60"></i><i class="s" style="left:809.5px;top:112.5px;width:5.1px;height:5.1px;--a:0.60"></i><i class="s" style="left:462.4px;top:157.4px;width:5.1px;height:5.1px;--a:0.60"></i><i class="s" style="left:546.5px;top:198.4px;width:5.1px;height:5.1px;--a:0.60"></i><i class="s" style="left:618.5px;top:254.4px;width:5.1px;height:5.1px;--a:0.60"></i><i class="s" style="left:439.4px;top:250.4px;width:5.1px;height:5.1px;--a:0.60"></i><i class="s" style="left:613.5px;top:74.5px;width:5.1px;height:5.1px;--a:0.60"></i><i class="s" style="left:791.5px;top:154.4px;width:5.1px;height:5.1px;--a:0.60"></i><i class="s" style="left:445.4px;top:189.4px;width:5.1px;height:5.1px;--a:0.60"></i><i class="s" style="left:7.5px;top:313.4px;width:5.1px;height:5.1px;--a:0.60"></i><i class="s" style="left:25.4px;top:349.4px;width:5.1px;height:5.1px;--a:0.60"></i><i class="s" style="left:99.5px;top:360.4px;width:5.1px;height:5.1px;--a:0.60"></i><i class="s" style="left:89.5px;top:404.4px;width:5.1px;height:5.1px;--a:0.60"></i><i class="s" style="left:364.4px;top:348.4px;width:5.1px;height:5.1px;--a:0.60"></i><i class="s" style="left:341.4px;top:391.4px;width:5.1px;height:5.1px;--a:0.60"></i><i class="s" style="left:264.4px;top:506.4px;width:5.1px;height:5.1px;--a:0.60"></i><i class="s" style="left:404.4px;top:476.4px;width:5.1px;height:5.1px;--a:0.60"></i><i class="s" style="left:338.4px;top:456.4px;width:5.1px;height:5.1px;--a:0.60"></i><i class="s" style="left:252.4px;top:450.4px;width:5.1px;height:5.1px;--a:0.60"></i><i class="s" style="left:150.4px;top:392.4px;width:5.1px;height:5.1px;--a:0.60"></i><i class="s" style="left:263.4px;top:336.4px;width:5.1px;height:5.1px;--a:0.60"></i><i class="s" style="left:252.4px;top:338.4px;width:5.1px;height:5.1px;--a:0.60"></i><i class="s" style="left:484.4px;top:326.4px;width:5.1px;height:5.1px;--a:0.60"></i><i class="s" style="left:653.5px;top:427.4px;width:5.1px;height:5.1px;--a:0.60"></i><i class="s" style="left:576.5px;top:456.4px;width:5.1px;height:5.1px;--a:0.60"></i><i class="s" style="left:722.5px;top:448.4px;width:5.1px;height:5.1px;--a:0.60"></i><i class="s" style="left:819.5px;top:318.4px;width:5.1px;height:5.1px;--a:0.60"></i><i class="s" style="left:386.1px;top:316.5px;width:5.0px;height:5.0px;--a:0.34"></i><i class="s" style="left:433.7px;top:332.5px;width:4.0px;height:4.0px;--a:0.35"></i><i class="s" style="left:537.2px;top:447.9px;width:3.9px;height:3.9px;--a:0.31"></i><i class="s" style="left:79.5px;top:456.9px;width:4.7px;height:4.7px;--a:0.26"></i><i class="s" style="left:835.6px;top:543.9px;width:4.6px;height:4.6px;--a:0.37"></i><i class="s" style="left:136.3px;top:11.2px;width:4.5px;height:4.5px;--a:0.26"></i><i class="s" style="left:164.4px;top:138.8px;width:3.8px;height:3.8px;--a:0.34"></i><i class="s" style="left:376.3px;top:475.4px;width:4.4px;height:4.4px;--a:0.38"></i><i class="s" style="left:426.6px;top:374.5px;width:4.4px;height:4.4px;--a:0.31"></i><i class="s" style="left:848.6px;top:561.1px;width:4.9px;height:4.9px;--a:0.39"></i><i class="s" style="left:270.3px;top:131.8px;width:4.1px;height:4.1px;--a:0.26"></i><i class="s" style="left:652.4px;top:227.2px;width:4.9px;height:4.9px;--a:0.33"></i><i class="s" style="left:815.5px;top:478.5px;width:3.7px;height:3.7px;--a:0.29"></i><i class="s" style="left:774.4px;top:266.1px;width:5.1px;height:5.1px;--a:0.33"></i><i class="s" style="left:64.5px;top:355.7px;width:4.8px;height:4.8px;--a:0.30"></i><i class="s" style="left:76.4px;top:189.1px;width:5.1px;height:5.1px;--a:0.40"></i><i class="s" style="left:103.1px;top:141.3px;width:3.9px;height:3.9px;--a:0.26"></i><i class="s" style="left:678.6px;top:102.4px;width:4.5px;height:4.5px;--a:0.34"></i><i class="s" style="left:164.7px;top:413.6px;width:3.9px;height:3.9px;--a:0.38"></i><i class="s" style="left:101.8px;top:239.0px;width:4.0px;height:4.0px;--a:0.30"></i><i class="s" style="left:826.3px;top:453.6px;width:4.2px;height:4.2px;--a:0.43"></i><i class="s" style="left:181.2px;top:223.7px;width:4.9px;height:4.9px;--a:0.38"></i><i class="s" style="left:88.1px;top:558.0px;width:4.0px;height:4.0px;--a:0.30"></i><i class="s" style="left:658.2px;top:187.5px;width:4.1px;height:4.1px;--a:0.26"></i><i class="s" style="left:79.4px;top:329.9px;width:4.1px;height:4.1px;--a:0.37"></i><i class="s" style="left:317.7px;top:256.7px;width:5.0px;height:5.0px;--a:0.35"></i><i class="s" style="left:490.2px;top:489.1px;width:4.0px;height:4.0px;--a:0.28"></i><i class="s" style="left:773.3px;top:461.7px;width:4.1px;height:4.1px;--a:0.29"></i><i class="s" style="left:630.0px;top:530.6px;width:4.0px;height:4.0px;--a:0.44"></i><i class="s" style="left:750.9px;top:341.4px;width:4.3px;height:4.3px;--a:0.27"></i><i class="s" style="left:35.8px;top:543.0px;width:4.1px;height:4.1px;--a:0.39"></i><i class="s" style="left:220.6px;top:464.8px;width:4.6px;height:4.6px;--a:0.31"></i><i class="s" style="left:151.9px;top:407.2px;width:3.8px;height:3.8px;--a:0.30"></i><i class="s" style="left:477.1px;top:480.9px;width:4.6px;height:4.6px;--a:0.31"></i><i class="s" style="left:781.0px;top:117.6px;width:3.8px;height:3.8px;--a:0.30"></i><i class="s" style="left:381.0px;top:36.9px;width:4.0px;height:4.0px;--a:0.32"></i><i class="s" style="left:488.1px;top:76.7px;width:4.2px;height:4.2px;--a:0.43"></i><i class="s" style="left:834.1px;top:371.2px;width:4.7px;height:4.7px;--a:0.37"></i><i class="s" style="left:122.1px;top:22.8px;width:3.8px;height:3.8px;--a:0.43"></i><i class="s" style="left:597.5px;top:543.2px;width:3.8px;height:3.8px;--a:0.38"></i><i class="s" style="left:411.8px;top:412.7px;width:4.2px;height:4.2px;--a:0.45"></i><i class="s" style="left:66.5px;top:309.0px;width:4.7px;height:4.7px;--a:0.43"></i><i class="s" style="left:627.6px;top:397.4px;width:4.8px;height:4.8px;--a:0.43"></i><i class="s" style="left:300.9px;top:386.9px;width:5.0px;height:5.0px;--a:0.42"></i><i class="s" style="left:356.3px;top:446.0px;width:4.9px;height:4.9px;--a:0.36"></i><i class="s" style="left:532.7px;top:217.2px;width:4.5px;height:4.5px;--a:0.37"></i><i class="s" style="left:70.5px;top:361.2px;width:5.1px;height:5.1px;--a:0.43"></i><i class="s" style="left:620.1px;top:220.5px;width:4.7px;height:4.7px;--a:0.37"></i><i class="s" style="left:376.6px;top:473.4px;width:3.9px;height:3.9px;--a:0.40"></i><i class="s" style="left:28.1px;top:340.1px;width:4.4px;height:4.4px;--a:0.30"></i><i class="s" style="left:594.9px;top:281.7px;width:4.6px;height:4.6px;--a:0.43"></i><i class="s" style="left:219.9px;top:9.3px;width:4.1px;height:4.1px;--a:0.39"></i><i class="s" style="left:174.3px;top:97.7px;width:5.0px;height:5.0px;--a:0.38"></i><i class="s" style="left:377.7px;top:503.2px;width:4.2px;height:4.2px;--a:0.38"></i><i class="s" style="left:170.9px;top:244.3px;width:4.8px;height:4.8px;--a:0.43"></i><i class="s" style="left:749.2px;top:218.4px;width:4.5px;height:4.5px;--a:0.31"></i><i class="s" style="left:118.0px;top:281.1px;width:4.9px;height:4.9px;--a:0.42"></i><i class="s" style="left:606.1px;top:535.9px;width:4.1px;height:4.1px;--a:0.28"></i><i class="s" style="left:385.1px;top:157.4px;width:4.0px;height:4.0px;--a:0.33"></i><i class="s" style="left:533.5px;top:280.0px;width:4.2px;height:4.2px;--a:0.42"></i><i class="s" style="left:835.8px;top:256.9px;width:3.8px;height:3.8px;--a:0.26"></i><i class="s" style="left:742.8px;top:25.9px;width:4.7px;height:4.7px;--a:0.36"></i><i class="s" style="left:265.2px;top:447.2px;width:3.8px;height:3.8px;--a:0.28"></i><i class="s" style="left:388.3px;top:16.4px;width:4.9px;height:4.9px;--a:0.30"></i><i class="s" style="left:122.2px;top:29.0px;width:4.6px;height:4.6px;--a:0.34"></i><i class="s" style="left:536.8px;top:370.1px;width:4.8px;height:4.8px;--a:0.44"></i><i class="s" style="left:583.3px;top:114.6px;width:4.4px;height:4.4px;--a:0.29"></i><i class="s" style="left:11.8px;top:267.5px;width:4.7px;height:4.7px;--a:0.29"></i><i class="s" style="left:233.6px;top:196.6px;width:4.7px;height:4.7px;--a:0.35"></i><i class="s" style="left:523.9px;top:427.1px;width:4.3px;height:4.3px;--a:0.41"></i></div><div class="a t" style="left:112px;top:7px;width:600px;text-align:center;font-weight:bold;font-size:13px;letter-spacing:0.7px;color:#d8d8d8">Gray 1:5 integration_R | &lt;*new*&gt;</div><div class="a" style="left:7px;top:6px;width:15px;height:15px;background:#d8d8ff;border:1px solid #8080c0"><div class="a" style="left:2px;top:4px;width:9px;height:7px;background:#6a6a6a"></div></div><div class="a" style="left:3px;top:26px;width:22px;height:98px;background:#515151;clip-path:polygon(0 22px,21px 0,100% 0,100% 100%,0 100%)"></div><div class="a" style="left:23px;top:27px;width:2px;height:96px;background:#00c060"></div><div class="a t" style="left:-46px;top:77.0px;width:120px;text-align:center;transform:rotate(-90deg);font-size:12px;color:#e8e8e8">integration_R</div><div class="a" style="left:804px;top:13px;width:10px;height:3px;background:#fff"></div><div class="a" style="left:825px;top:10px;width:10px;height:2px;background:#fff"></div><div class="a" style="left:825px;top:12px;width:0;height:0;border-left:5px solid transparent;border-right:5px solid transparent;border-bottom:7px solid #fff"></div><div class="a" style="left:846px;top:13px;width:10px;height:3px;background:#fff"></div><div class="a" style="left:849px;top:10px;width:3px;height:10px;background:#fff"></div><svg class="a" style="left:867px;top:9px" width="12" height="12"><path d="M1.5 1.5L10.5 10.5M10.5 1.5L1.5 10.5" stroke="#fff" stroke-width="2.2"/></svg><svg class="a" style="left:9px;top:530px" width="12" height="60"><g fill="none" stroke="#f0f0f0" stroke-width="1"><path d="M1 1L10 10M10 5V10H5"/><rect x="3.5" y="20.5" width="5" height="5"/><path d="M1 18L4 21M11 18L8 21M1 28L4 25M11 28L8 25"/><rect x="0.5" y="38.5" width="5" height="5"/><path d="M3.5 38.5V34.5H10.5V41.5H5.5"/><circle cx="6" cy="55" r="5"/><circle cx="6" cy="55" r="1" fill="#f0f0f0"/></g></svg></div><div class="a" style="left:1163px;top:156px;width:490px;height:774px;background:rgba(20,20,20,0.3);z-index:9"></div><div class="a" style="left:1165px;top:157px;width:486px;height:771px;background:#5663b1;z-index:10"><div class="a" style="left:2px;top:25px;width:482px;height:744px;background:#e0e0e2"></div><div class="a t" style="left:-1px;top:6px;width:467px;text-align:center;font-weight:bold;font-size:13px;letter-spacing:0.6px;color:#fff">StarAlignment</div><div class="a" style="left:5px;top:5px;width:17px;height:17px;background:#0c4a0c"><div class="a" style="left:2px;top:2px;width:11px;height:11px;background:linear-gradient(135deg,#6a8cff,#3050e0)"></div><div class="a t" style="left:6px;top:5px;font-size:12px;color:#f7a030">&#9733;</div></div><svg class="a" style="left:447px;top:8px" width="12" height="12"><path d="M1.5 1.5H10.5" stroke="#fff" stroke-width="2"/><path d="M6 3.5L10.5 9.5H1.5Z" fill="#fff"/></svg><svg class="a" style="left:468px;top:8px" width="12" height="12"><path d="M1.5 1.5L10.5 10.5M10.5 1.5L1.5 10.5" stroke="#fff" stroke-width="2.2"/></svg></div><div class="a t" style="left:1005px;top:195px;width:300px;text-align:right;z-index:11;font-size:12px;color:#2b2b2b;letter-spacing:0.15px">Reference image:</div><div class="a" style="left:1309px;top:190px;width:234px;height:20px;z-index:11;background:#fff;border:1px solid #8a8a8a;border-top-color:#777"><div class="a t" style="left:5px;top:4px;font-size:12px;letter-spacing:0.25px;color:#222">integration_G</div></div><div class="a" style="left:1548px;top:190px;width:68px;height:20px;z-index:11;background:linear-gradient(#f6f6f6,#dcdcdc);border:1px solid #8c8c8c"><div class="a t" style="left:4px;top:3px;font-size:12px;letter-spacing:0.25px;color:#222">View</div><div class="a" style="left:48px;top:1px;width:1px;height:16px;background:#a8a8a8"></div><div class="a" style="left:53px;top:8px;width:0;height:0;border-left:5px solid transparent;border-right:5px solid transparent;border-top:5px solid #222"></div></div><div class="a" style="left:1625px;top:197px;width:0px;height:0px;z-index:11;border-left:6px solid transparent;border-right:6px solid transparent;border-top:6px solid #333"></div><div class="a t" style="left:1005px;top:219px;width:300px;text-align:right;z-index:11;font-size:12px;color:#2b2b2b;letter-spacing:0.15px">Distortion model:</div><div class="a" style="left:1309px;top:216px;width:283px;height:19px;z-index:11;background:#fff;border:1px solid #8a8a8a;border-top-color:#777"><div class="a t" style="left:5px;top:3px;font-size:12px;letter-spacing:0.25px;color:#222"></div></div><svg class="a" style="left:1598px;top:219px;z-index:11" width="18" height="13"><path d="M5 0H17V13H5L0 6.5Z" fill="#444"/><path d="M8 3.5L13 9.5M13 3.5L8 9.5" stroke="#eee" stroke-width="2"/></svg><svg class="a" style="left:1624px;top:219px;z-index:11" width="14" height="12"><path d="M0 2H5L6 3.5H13V12H0Z" fill="#555"/><path d="M0 5H13" stroke="#ddd" stroke-width="1"/></svg><div class="a" style="left:1309px;top:239px;width:13px;height:13px;z-index:11;background:#d4d4d4;border:1px solid #9a9a9a"></div><div class="a t" style="left:1328px;top:240px;z-index:11;font-size:12px;color:#a0a0a0;letter-spacing:0.15px">Undistorted reference</div><div class="a t" style="left:1005px;top:262px;width:300px;text-align:right;z-index:11;font-size:12px;color:#2b2b2b;letter-spacing:0.15px">Registration model:</div><div class="a" style="left:1309px;top:258px;width:183px;height:20px;z-index:11;background:linear-gradient(#f6f6f6,#dcdcdc);border:1px solid #8c8c8c"><div class="a t" style="left:4px;top:3px;font-size:12px;letter-spacing:0.25px;color:#222">Projective Transformation</div><div class="a" style="left:163px;top:1px;width:1px;height:16px;background:#a8a8a8"></div><div class="a" style="left:168px;top:8px;width:0;height:0;border-left:5px solid transparent;border-right:5px solid transparent;border-top:5px solid #222"></div></div><div class="a t" style="left:1005px;top:287px;width:300px;text-align:right;z-index:11;font-size:12px;color:#a0a0a0;letter-spacing:0.15px">Spline smoothness:</div><div class="a" style="left:1309px;top:282px;width:76px;height:20px;z-index:11;background:#d8d8d8;border:1px solid #8a8a8a;border-top-color:#777"><div class="a t" style="left:5px;top:4px;font-size:12px;letter-spacing:0.25px;color:#9a9a9a">0.25</div></div><div class="a" style="left:1388px;top:289px;width:253px;height:6px;z-index:11;background:#ececec;border:1px solid #8a8a8a"></div><div class="a" style="left:1389px;top:290px;width:64px;height:4px;z-index:11;background:#9a9a9a"></div><div class="a" style="left:1447px;top:286px;width:12px;height:12px;z-index:11;background:radial-gradient(circle at 40% 35%,#a8a8a8,#7a7a7a);border-radius:50%;border:1px solid #707070"></div><div class="a" style="left:1309px;top:307px;width:13px;height:13px;z-index:11;background:#fff;border:1px solid #777"></div><div class="a t" style="left:1328px;top:308px;z-index:11;font-size:12px;color:#2b2b2b;letter-spacing:0.15px">Distortion correction</div><div class="a t" style="left:1005px;top:330px;width:300px;text-align:right;z-index:11;font-size:12px;color:#a0a0a0;letter-spacing:0.15px">Distortion residual:</div><div class="a" style="left:1309px;top:326px;width:76px;height:19px;z-index:11;background:#d8d8d8;border:1px solid #8a8a8a;border-top-color:#777"><div class="a t" style="left:5px;top:3px;font-size:12px;letter-spacing:0.25px;color:#9a9a9a">0.005</div></div><div class="a" style="left:1388px;top:332px;width:253px;height:6px;z-index:11;background:#ececec;border:1px solid #8a8a8a"></div><div class="a" style="left:1389px;top:333px;width:3px;height:4px;z-index:11;background:#9a9a9a"></div><div class="a" style="left:1389px;top:329px;width:12px;height:12px;z-index:11;background:radial-gradient(circle at 40% 35%,#a8a8a8,#7a7a7a);border-radius:50%;border:1px solid #707070"></div><div class="a t" style="left:1005px;top:354px;width:300px;text-align:right;z-index:11;font-size:12px;color:#a0a0a0;letter-spacing:0.15px">Distortion iterations:</div><div class="a" style="left:1309px;top:350px;width:76px;height:20px;z-index:11;background:#d8d8d8;border:1px solid #8a8a8a;border-top-color:#777"><div class="a t" style="left:5px;top:4px;font-size:12px;letter-spacing:0.25px;color:#9a9a9a">20</div></div><svg class="a" style="left:1370px;top:351px;z-index:11" width="14" height="18"><rect x="0" y="0" width="14" height="8.5" fill="#f2f2f2"/><rect x="0" y="9.5" width="14" height="8.5" fill="#f2f2f2"/><path d="M3.5 6.5L7 3L10.5 6.5Z" fill="#8a8a8a"/><path d="M3.5 11.5L7 15L10.5 11.5Z" fill="#8a8a8a"/></svg><div class="a t" style="left:1005px;top:379px;width:300px;text-align:right;z-index:11;font-size:12px;color:#2b2b2b;letter-spacing:0.15px">Working mode:</div><div class="a" style="left:1309px;top:375px;width:183px;height:20px;z-index:11;background:linear-gradient(#f6f6f6,#dcdcdc);border:1px solid #8c8c8c"><div class="a t" style="left:4px;top:3px;font-size:12px;letter-spacing:0.25px;color:#222">Register/Match Images</div><div class="a" style="left:163px;top:1px;width:1px;height:16px;background:#a8a8a8"></div><div class="a" style="left:168px;top:8px;width:0;height:0;border-left:5px solid transparent;border-right:5px solid transparent;border-top:5px solid #222"></div></div><div class="a" style="left:1309px;top:399px;width:13px;height:13px;z-index:11;background:#fff;border:1px solid #777"></div><div class="a t" style="left:1328px;top:400px;z-index:11;font-size:12px;color:#2b2b2b;letter-spacing:0.15px">Generate masks</div><div class="a" style="left:1309px;top:417px;width:13px;height:13px;z-index:11;background:#fff;border:1px solid #777"></div><div class="a t" style="left:1328px;top:418px;z-index:11;font-size:12px;color:#2b2b2b;letter-spacing:0.15px">Generate drizzle data</div><div class="a" style="left:1309px;top:435px;width:13px;height:13px;z-index:11;background:#fff;border:1px solid #777"></div><div class="a t" style="left:1328px;top:436px;z-index:11;font-size:12px;color:#2b2b2b;letter-spacing:0.15px">Frame adaptation</div><div class="a" style="left:1175px;top:455px;width:466px;height:19px;z-index:11;background:#c9c6be"><div class="a t" style="left:4px;top:3px;font-size:12px;letter-spacing:0.3px;color:#1f6dc6">Target Images</div><svg class="a" style="left:448px;top:4px" width="11" height="12"><path d="M5.5 0L10.5 5H0.5ZM5.5 5L10.5 10H0.5Z" fill="#0a58c4"/><path d="M0.5 10.5H10.5" stroke="#0a58c4" stroke-width="1.2"/></svg></div><div class="a" style="left:1176px;top:481px;width:338px;height:190px;z-index:11;background:#fff;border:1px solid #8a8a8a"></div><div class="a" style="left:1177px;top:502px;width:336px;height:20px;z-index:11;background:#eef2fc"></div><div class="a" style="left:1177px;top:542px;width:336px;height:20px;z-index:11;background:#eef2fc"></div><div class="a" style="left:1177px;top:582px;width:336px;height:20px;z-index:11;background:#eef2fc"></div><div class="a" style="left:1177px;top:622px;width:336px;height:20px;z-index:11;background:#eef2fc"></div><div class="a" style="left:1177px;top:662px;width:336px;height:8px;z-index:11;background:#eef2fc"></div><div class="a" style="left:1196px;top:482px;width:1px;height:39px;z-index:11;background:#e4e4e4"></div><div class="a" style="left:1221px;top:482px;width:1px;height:39px;z-index:11;background:#e4e4e4"></div><div class="a t" style="left:1183px;top:485px;z-index:11;font-size:12px;color:#2b2b2b;letter-spacing:0.15px">1</div><svg class="a" style="left:1202px;top:487px;z-index:12" width="13" height="11"><path d="M1.5 6L5 9.5L11.5 2" fill="none" stroke="#1fae3a" stroke-width="2"/></svg><div class="a" style="left:1227px;top:485px;width:16px;height:16px;z-index:11;border:2px solid #444;border-top-width:3px;background:#fff;z-index:12"></div><div class="a t" style="left:1249px;top:485px;z-index:11;font-size:12px;color:#2b2b2b;letter-spacing:0.15px">integration_R</div><div class="a t" style="left:1183px;top:505px;z-index:11;font-size:12px;color:#2b2b2b;letter-spacing:0.15px">2</div><svg class="a" style="left:1202px;top:507px;z-index:12" width="13" height="11"><path d="M1.5 6L5 9.5L11.5 2" fill="none" stroke="#1fae3a" stroke-width="2"/></svg><div class="a" style="left:1227px;top:505px;width:16px;height:16px;z-index:11;border:2px solid #444;border-top-width:3px;background:#fff;z-index:12"></div><div class="a t" style="left:1249px;top:505px;z-index:11;font-size:12px;color:#2b2b2b;letter-spacing:0.15px">integration_B</div><div class="a" style="left:1519px;top:480px;width:122px;height:21px;z-index:11;background:linear-gradient(#f4f4f4,#d6d6d6);border:1px solid #8a8a8a;"><div class="a t" style="left:0;top:4px;width:120px;text-align:center;font-size:12px;letter-spacing:0.3px;color:#222">Add Files</div></div><div class="a" style="left:1519px;top:505px;width:122px;height:21px;z-index:11;background:linear-gradient(#f4f4f4,#d6d6d6);border:1px solid #7aa8f0;box-shadow:inset 0 0 0 1px #a8c8f8;"><div class="a t" style="left:0;top:4px;width:120px;text-align:center;font-size:12px;letter-spacing:0.3px;color:#222">Add Views</div></div><div class="a" style="left:1519px;top:530px;width:122px;height:21px;z-index:11;background:linear-gradient(#f4f4f4,#d6d6d6);border:1px solid #8a8a8a;"><div class="a t" style="left:0;top:4px;width:120px;text-align:center;font-size:12px;letter-spacing:0.3px;color:#222">Select All</div></div><div class="a" style="left:1519px;top:555px;width:122px;height:21px;z-index:11;background:linear-gradient(#f4f4f4,#d6d6d6);border:1px solid #8a8a8a;"><div class="a t" style="left:0;top:4px;width:120px;text-align:center;font-size:12px;letter-spacing:0.3px;color:#222">Invert Selection</div></div><div class="a" style="left:1519px;top:580px;width:122px;height:21px;z-index:11;background:linear-gradient(#f4f4f4,#d6d6d6);border:1px solid #8a8a8a;"><div class="a t" style="left:0;top:4px;width:120px;text-align:center;font-size:12px;letter-spacing:0.3px;color:#a8a8a8">Toggle Selected</div></div><div class="a" style="left:1519px;top:605px;width:122px;height:21px;z-index:11;background:linear-gradient(#f4f4f4,#d6d6d6);border:1px solid #8a8a8a;"><div class="a t" style="left:0;top:4px;width:120px;text-align:center;font-size:12px;letter-spacing:0.3px;color:#a8a8a8">Remove Selected</div></div><div class="a" style="left:1519px;top:630px;width:122px;height:21px;z-index:11;background:linear-gradient(#f4f4f4,#d6d6d6);border:1px solid #8a8a8a;"><div class="a t" style="left:0;top:4px;width:120px;text-align:center;font-size:12px;letter-spacing:0.3px;color:#222">Clear</div></div><div class="a" style="left:1520px;top:655px;width:13px;height:13px;z-index:11;background:#fff;border:1px solid #777"></div><div class="a t" style="left:1538px;top:656px;z-index:11;font-size:12px;color:#2b2b2b;letter-spacing:0.15px">Full paths</div><div class="a" style="left:1175px;top:678px;width:466px;height:19px;z-index:11;background:#c9c6be"><div class="a t" style="left:4px;top:3px;font-size:12px;letter-spacing:0.3px;color:#1f6dc6">Format Hints</div><svg class="a" style="left:448px;top:4px" width="11" height="12"><path d="M0.5 0.6H10.5" stroke="#0a58c4" stroke-width="1.2"/><path d="M0.5 1L10.5 1L5.5 6ZM0.5 6H10.5L5.5 11Z" fill="#0a58c4"/></svg></div><div class="a" style="left:1175px;top:703px;width:466px;height:19px;z-index:11;background:#c9c6be"><div class="a t" style="left:4px;top:3px;font-size:12px;letter-spacing:0.3px;color:#1f6dc6">Output Images</div><svg class="a" style="left:448px;top:4px" width="11" height="12"><path d="M5.5 0L10.5 5H0.5ZM5.5 5L10.5 10H0.5Z" fill="#0a58c4"/><path d="M0.5 10.5H10.5" stroke="#0a58c4" stroke-width="1.2"/></svg></div><div class="a t" style="left:1005px;top:732px;width:300px;text-align:right;z-index:11;font-size:12px;color:#2b2b2b;letter-spacing:0.15px">Output directory:</div><div class="a" style="left:1309px;top:728px;width:308px;height:20px;z-index:11;background:#fff;border:1px solid #8a8a8a;border-top-color:#777"><div class="a t" style="left:5px;top:4px;font-size:12px;letter-spacing:0.25px;color:#222"></div></div><svg class="a" style="left:1625px;top:732px;z-index:11" width="13" height="11"><path d="M0 2H5L6 3.5H13V11H0Z" fill="#555"/><path d="M0 5H13" stroke="#ddd" stroke-width="1"/></svg><div class="a t" style="left:1005px;top:756px;width:300px;text-align:right;z-index:11;font-size:12px;color:#2b2b2b;letter-spacing:0.15px">Output extension:</div><div class="a" style="left:1309px;top:752px;width:46px;height:20px;z-index:11;background:#fff;border:1px solid #8a8a8a;border-top-color:#777"><div class="a t" style="left:5px;top:4px;font-size:12px;letter-spacing:0.25px;color:#222">.fit</div></div><div class="a t" style="left:1339px;top:756px;width:60px;text-align:right;z-index:11;font-size:12px;color:#2b2b2b;letter-spacing:0.15px">Prefix:</div><div class="a" style="left:1403px;top:752px;width:46px;height:20px;z-index:11;background:#fff;border:1px solid #8a8a8a;border-top-color:#777"><div class="a t" style="left:5px;top:4px;font-size:12px;letter-spacing:0.25px;color:#222"></div></div><div class="a t" style="left:1439px;top:756px;width:60px;text-align:right;z-index:11;font-size:12px;color:#2b2b2b;letter-spacing:0.15px">Postfix:</div><div class="a" style="left:1503px;top:752px;width:46px;height:20px;z-index:11;background:#fff;border:1px solid #8a8a8a;border-top-color:#777"><div class="a t" style="left:5px;top:4px;font-size:12px;letter-spacing:0.25px;color:#222">_r</div></div><div class="a t" style="left:1531px;top:756px;width:60px;text-align:right;z-index:11;font-size:12px;color:#2b2b2b;letter-spacing:0.15px">Mask:</div><div class="a" style="left:1595px;top:752px;width:46px;height:20px;z-index:11;background:#fff;border:1px solid #8a8a8a;border-top-color:#777"><div class="a t" style="left:5px;top:4px;font-size:12px;letter-spacing:0.25px;color:#222">_m</div></div><div class="a t" style="left:1005px;top:780px;width:300px;text-align:right;z-index:11;font-size:12px;color:#2b2b2b;letter-spacing:0.15px">Sample format:</div><div class="a" style="left:1309px;top:776px;width:182px;height:20px;z-index:11;background:linear-gradient(#f6f6f6,#dcdcdc);border:1px solid #8c8c8c"><div class="a t" style="left:4px;top:3px;font-size:12px;letter-spacing:0.25px;color:#222">Same as target</div><div class="a" style="left:162px;top:1px;width:1px;height:16px;background:#a8a8a8"></div><div class="a" style="left:167px;top:8px;width:0;height:0;border-left:5px solid transparent;border-right:5px solid transparent;border-top:5px solid #222"></div></div><div class="a" style="left:1309px;top:803px;width:13px;height:13px;z-index:11;background:#fff;border:1px solid #777"></div><div class="a t" style="left:1328px;top:804px;z-index:11;font-size:12px;color:#2b2b2b;letter-spacing:0.15px">Overwrite existing files</div><div class="a t" style="left:1441px;top:804px;width:80px;text-align:right;z-index:11;font-size:12px;color:#2b2b2b;letter-spacing:0.15px">On error:</div><div class="a" style="left:1525px;top:800px;width:89px;height:20px;z-index:11;background:linear-gradient(#f6f6f6,#dcdcdc);border:1px solid #8c8c8c"><div class="a t" style="left:4px;top:3px;font-size:12px;letter-spacing:0.25px;color:#222">Continue</div><div class="a" style="left:69px;top:1px;width:1px;height:16px;background:#a8a8a8"></div><div class="a" style="left:74px;top:8px;width:0;height:0;border-left:5px solid transparent;border-right:5px solid transparent;border-top:5px solid #222"></div></div><div class="a" style="left:1175px;top:826px;width:466px;height:19px;z-index:11;background:#c9c6be"><div class="a t" style="left:4px;top:3px;font-size:12px;letter-spacing:0.3px;color:#1f6dc6">Star Detection</div><svg class="a" style="left:448px;top:4px" width="11" height="12"><path d="M0.5 0.6H10.5" stroke="#0a58c4" stroke-width="1.2"/><path d="M0.5 1L10.5 1L5.5 6ZM0.5 6H10.5L5.5 11Z" fill="#0a58c4"/></svg></div><div class="a" style="left:1175px;top:851px;width:466px;height:19px;z-index:11;background:#c9c6be"><div class="a t" style="left:4px;top:3px;font-size:12px;letter-spacing:0.3px;color:#1f6dc6">Star Matching</div><svg class="a" style="left:448px;top:4px" width="11" height="12"><path d="M0.5 0.6H10.5" stroke="#0a58c4" stroke-width="1.2"/><path d="M0.5 1L10.5 1L5.5 6ZM0.5 6H10.5L5.5 11Z" fill="#0a58c4"/></svg></div><div class="a" style="left:1175px;top:876px;width:466px;height:19px;z-index:11;background:#c9c6be"><div class="a t" style="left:4px;top:3px;font-size:12px;letter-spacing:0.3px;color:#1f6dc6">Interpolation</div><svg class="a" style="left:448px;top:4px" width="11" height="12"><path d="M0.5 0.6H10.5" stroke="#0a58c4" stroke-width="1.2"/><path d="M0.5 1L10.5 1L5.5 6ZM0.5 6H10.5L5.5 11Z" fill="#0a58c4"/></svg></div><div class="a" style="left:1167px;top:903px;width:482px;height:23px;z-index:11;background:#c9c6be"></div><svg class="a" style="left:1174px;top:908px;z-index:12" width="70" height="13"><path d="M1 1L12 12H1Z" fill="#0a58c4"/><rect x="24" y="1" width="11" height="11" fill="#0a58c4"/><circle cx="52" cy="6.5" r="5.5" fill="#0a58c4"/></svg><svg class="a" style="left:1583px;top:908px;z-index:12" width="62" height="14"><rect x="1.5" y="1.5" width="9" height="9" fill="none" stroke="#0a58c4" stroke-width="2"/><path d="M24.5 1.5H30L35 6.5V10.5H24.5Z" fill="none" stroke="#0a58c4" stroke-width="2"/><path d="M29.5 1.5V6.5H35" fill="none" stroke="#0a58c4" stroke-width="1.2"/><g stroke="#0a58c4" stroke-width="1.8" fill="none"><path d="M47 1L51 5M59 1L55 5M47 13L51 9M59 13L55 9"/></g><path d="M52.5 6.2V2L48.5 6.2ZM53.5 6.2V2L57.5 6.2ZM52.5 7.8V12L48.5 7.8ZM53.5 7.8V12L57.5 7.8Z" fill="#0a58c4"/></svg><svg class="a" style="left:6px;top:50px" width="6" height="22"><pattern id="gp6_50" width="4" height="4" patternUnits="userSpaceOnUse"><rect x="0" y="0" width="2" height="2" fill="#909090"/><rect x="2" y="2" width="2" height="2" fill="#909090"/><rect x="1" y="1" width="1" height="1" fill="#c8c8c8"/><rect x="3" y="3" width="1" height="1" fill="#c8c8c8"/></pattern><rect x="0" y="0" width="6" height="22" fill="url(#gp6_50)"/></svg><svg class="a" style="left:24px;top:53px;z-index:1" width="16" height="16"><path d="M15 13.5C15 7 9 5 4.5 9" fill="none" stroke="#8a8a8a" stroke-width="3"/><path d="M0.5 6.5L8 13.5H0.5Z" fill="#8a8a8a"/></svg><svg class="a" style="left:52px;top:53px;z-index:1" width="16" height="16"><path d="M1 13.5C1 7 7 5 11.5 9" fill="none" stroke="#8a8a8a" stroke-width="3"/><path d="M15.5 6.5L8 13.5H15.5Z" fill="#8a8a8a"/></svg><div class="a" style="left:76px;top:50px;width:1px;height:22px;background:#b8b8b8"></div><svg class="a" style="left:86px;top:53px;z-index:1" width="16" height="16"><rect x="0.5" y="4.5" width="10" height="6" fill="none" stroke="#555" stroke-width="1"/><rect x="2" y="6" width="5" height="3" fill="#1a5fc6"/><path d="M10 2H14M12 2V14M10 14H14" stroke="#333" stroke-width="1.3" fill="none"/></svg><svg class="a" style="left:113px;top:53px;z-index:1" width="16" height="16"><rect x="4.5" y="0.5" width="11" height="9" fill="#fff" stroke="#333"/><rect x="4" y="0" width="12" height="2.5" fill="#1a5fc6"/><rect x="0.5" y="5.5" width="11" height="10" fill="#fff" stroke="#333"/><rect x="0" y="5" width="12" height="2.5" fill="#1a5fc6"/><circle cx="12" cy="12" r="4.5" fill="#1a9e5a"/><path d="M9.5 12H14.5M12 9.5V14.5" stroke="#fff" stroke-width="1.5"/></svg><div class="a" style="left:138px;top:50px;width:1px;height:22px;background:#b8b8b8"></div><svg class="a" style="left:148px;top:53px;z-index:1" width="16" height="16"><rect x="0.5" y="0.5" width="15" height="15" fill="#fff" stroke="#333"/><rect x="0" y="0" width="16" height="3" fill="#1a5fc6"/><circle cx="12" cy="12" r="4.5" fill="#1a9e5a"/><path d="M9.5 12H14.5M12 9.5V14.5" stroke="#fff" stroke-width="1.5"/></svg><svg class="a" style="left:176px;top:53px;z-index:1" width="16" height="16"><defs><linearGradient id="gg1" x1="0" x2="1"><stop offset="0" stop-color="#777"/><stop offset="1" stop-color="#aaa"/></linearGradient></defs><rect x="0" y="1" width="14" height="14" fill="url(#gg1)"/><rect x="8.5" y="4.5" width="7" height="8" fill="#b0b0b0" stroke="#777"/></svg><svg class="a" style="left:204px;top:53px;z-index:1" width="16" height="16"><rect x="0" y="1" width="14" height="14" fill="url(#gg1)"/><rect x="8.5" y="4.5" width="7" height="8" fill="#b0b0b0" stroke="#777"/></svg><svg class="a" style="left:232px;top:50px" width="6" height="22"><pattern id="gp232_50" width="4" height="4" patternUnits="userSpaceOnUse"><rect x="0" y="0" width="2" height="2" fill="#909090"/><rect x="2" y="2" width="2" height="2" fill="#909090"/><rect x="1" y="1" width="1" height="1" fill="#c8c8c8"/><rect x="3" y="3" width="1" height="1" fill="#c8c8c8"/></pattern><rect x="0" y="0" width="6" height="22" fill="url(#gp232_50)"/></svg><svg class="a" style="left:250px;top:53px;z-index:1" width="16" height="16"><rect x="0.5" y="0.5" width="15" height="15" fill="#fff" stroke="#444"/><path d="M0 16L16 0V16Z" fill="#fff"/><path d="M0 0H16L0 16Z" fill="#444"/><rect x="2" y="2" width="5" height="5" fill="#fff"/><rect x="9" y="9" width="5" height="5" fill="#444"/></svg><svg class="a" style="left:278px;top:53px;z-index:1" width="16" height="16"><defs><linearGradient id="gg2" x1="0" x2="1"><stop offset="0" stop-color="#eee"/><stop offset="1" stop-color="#444"/></linearGradient></defs><rect x="0.5" y="0.5" width="15" height="15" fill="url(#gg2)" stroke="#444"/><rect x="1" y="8" width="7" height="7" fill="#fff"/><rect x="8" y="8" width="7" height="7" fill="#555"/></svg><svg class="a" style="left:306px;top:53px;z-index:1" width="16" height="16"><defs><linearGradient id="gg3" x1="0" y1="0" x2="0" y2="1"><stop offset="0" stop-color="#f02040"/><stop offset="0.5" stop-color="#a040f0"/><stop offset="1" stop-color="#40e040"/></linearGradient></defs><rect x="0" y="0" width="14" height="16" fill="url(#gg3)"/><rect x="0" y="0" width="5" height="16" fill="#000"/><path d="M1 8L5 4V6H11V4L15 8L11 12V10H5V12Z" fill="#fff" stroke="#000" stroke-width="0.8"/></svg><svg class="a" style="left:334px;top:50px" width="6" height="22"><pattern id="gp334_50" width="4" height="4" patternUnits="userSpaceOnUse"><rect x="0" y="0" width="2" height="2" fill="#909090"/><rect x="2" y="2" width="2" height="2" fill="#909090"/><rect x="1" y="1" width="1" height="1" fill="#c8c8c8"/><rect x="3" y="3" width="1" height="1" fill="#c8c8c8"/></pattern><rect x="0" y="0" width="6" height="22" fill="url(#gp334_50)"/></svg><div class="a" style="left:348px;top:50px;width:174px;height:22px;background:linear-gradient(#f8f8f8,#d8d8d8);border:1px solid #888"></div><div class="a" style="left:356px;top:55px;width:12px;height:12px;background:#c8c8c8;border:1px solid #222"></div><div class="a t" style="left:376px;top:55px;font-size:13px;color:#222;letter-spacing:0.3px">Gray</div><div class="a" style="left:504px;top:52px;width:1px;height:18px;background:#aaa"></div><div class="a" style="left:508px;top:59px;width:0;height:0;border-left:4.5px solid transparent;border-right:4.5px solid transparent;border-top:5px solid #222"></div><svg class="a" style="left:530px;top:50px" width="6" height="22"><pattern id="gp530_50" width="4" height="4" patternUnits="userSpaceOnUse"><rect x="0" y="0" width="2" height="2" fill="#909090"/><rect x="2" y="2" width="2" height="2" fill="#909090"/><rect x="1" y="1" width="1" height="1" fill="#c8c8c8"/><rect x="3" y="3" width="1" height="1" fill="#c8c8c8"/></pattern><rect x="0" y="0" width="6" height="22" fill="url(#gp530_50)"/></svg><div class="a" style="left:544px;top:49px;width:24px;height:24px;background:#fff;border:1px solid #888"></div><svg class="a" style="left:548px;top:53px;z-index:1" width="16" height="16"><path d="M1 8H15M8 1V15" stroke="#444" stroke-width="1.6"/><rect x="5.5" y="5.5" width="5" height="5" fill="#fff" stroke="#444"/></svg><svg class="a" style="left:577px;top:53px;z-index:1" width="16" height="16"><path d="M0 0H6L0 6ZM16 0H10L16 6ZM0 16H6L0 10ZM16 16H10L16 10Z" fill="#444"/><path d="M2 2L14 14M14 2L2 14" stroke="#444" stroke-width="2"/><rect x="6.5" y="6.5" width="3" height="3" fill="#fff"/></svg><svg class="a" style="left:604px;top:53px;z-index:1" width="16" height="16"><path d="M6 6H0L6 0ZM10 6H16L10 0ZM6 10H0L6 16ZM10 10H16L10 16Z" fill="#444"/><path d="M1 1L7 7M15 1L9 7M1 15L7 9M15 15L9 9" stroke="#444" stroke-width="2"/></svg><svg class="a" style="left:632px;top:53px;z-index:1" width="16" height="16"><path d="M8 0L11 4H5ZM8 16L11 12H5ZM0 8L4 5V11ZM16 8L12 5V11Z" fill="#444"/><path d="M8 2V14M2 8H14" stroke="#444" stroke-width="2.5"/></svg><svg class="a" style="left:660px;top:53px;z-index:1" width="16" height="16"><path d="M8 0L16 8L8 16L0 8Z" fill="#444"/><rect x="5" y="5" width="2.5" height="2.5" fill="#fff"/><rect x="8.5" y="5" width="2.5" height="2.5" fill="#fff"/><rect x="5" y="8.5" width="2.5" height="2.5" fill="#fff"/><rect x="8.5" y="8.5" width="2.5" height="2.5" fill="#fff"/></svg><svg class="a" style="left:688px;top:53px;z-index:1" width="16" height="16"><path d="M0 4L3 1H16V16H0Z" fill="#fff" stroke="#444"/><path d="M0 4L4 0V16H0Z" fill="#444"/></svg><svg class="a" style="left:716px;top:53px;z-index:1" width="16" height="16"><path d="M0 4L3 1H16V16H0Z" fill="#fff" stroke="#444"/><path d="M0 4L4 0V16H0Z" fill="#444"/><path d="M7 4L13 10H10L11 13L9 13L8 10L7 12Z" fill="#666"/></svg><svg class="a" style="left:746px;top:53px;z-index:1" width="14" height="16"><path d="M1 0L12 10H7L9 15L6 16L4 11L1 14Z" fill="#8a8a8a"/></svg><svg class="a" style="left:772px;top:50px" width="6" height="22"><pattern id="gp772_50" width="4" height="4" patternUnits="userSpaceOnUse"><rect x="0" y="0" width="2" height="2" fill="#909090"/><rect x="2" y="2" width="2" height="2" fill="#909090"/><rect x="1" y="1" width="1" height="1" fill="#c8c8c8"/><rect x="3" y="3" width="1" height="1" fill="#c8c8c8"/></pattern><rect x="0" y="0" width="6" height="22" fill="url(#gp772_50)"/></svg><svg class="a" style="left:790px;top:53px;z-index:1" width="16" height="16"><circle cx="6.5" cy="6.5" r="5" fill="#fff" stroke="#333" stroke-width="2"/><path d="M10 10L15 15" stroke="#333" stroke-width="2.6" stroke-linecap="round"/><path d="M4 6.5H9M6.5 4V9" stroke="#1a5fc6" stroke-width="1.8"/></svg><svg class="a" style="left:818px;top:53px;z-index:1" width="16" height="16"><circle cx="6.5" cy="6.5" r="5" fill="#fff" stroke="#333" stroke-width="2"/><path d="M10 10L15 15" stroke="#333" stroke-width="2.6" stroke-linecap="round"/><path d="M4 6.5H9" stroke="#1a5fc6" stroke-width="1.8"/></svg><div class="a" style="left:842px;top:50px;width:1px;height:22px;background:#b8b8b8"></div><svg class="a" style="left:852px;top:53px;z-index:1" width="16" height="16"><circle cx="6.5" cy="6.5" r="5" fill="#fff" stroke="#333" stroke-width="2"/><path d="M10 10L15 15" stroke="#333" stroke-width="2.6" stroke-linecap="round"/><rect x="5" y="5" width="3" height="3" fill="#1a5fc6"/></svg><svg class="a" style="left:880px;top:53px;z-index:1" width="16" height="16"><circle cx="6.5" cy="6.5" r="5" fill="#fff" stroke="#333" stroke-width="2"/><path d="M10 10L15 15" stroke="#333" stroke-width="2.6" stroke-linecap="round"/><rect x="6.5" y="4" width="2" height="2" fill="#1a5fc6"/><rect x="4" y="6.5" width="2" height="2" fill="#1a5fc6"/><rect x="6.5" y="6.5" width="2" height="2" fill="#1a5fc6"/></svg><svg class="a" style="left:908px;top:53px;z-index:1" width="16" height="16"><circle cx="6.5" cy="6.5" r="5" fill="#fff" stroke="#333" stroke-width="2"/><path d="M10 10L15 15" stroke="#333" stroke-width="2.6" stroke-linecap="round"/><rect x="4" y="4" width="2" height="2" fill="#1a5fc6"/><rect x="4" y="7" width="2" height="2" fill="#1a5fc6"/><rect x="7" y="7" width="2" height="2" fill="#1a5fc6"/></svg><div class="a" style="left:932px;top:50px;width:1px;height:22px;background:#b8b8b8"></div><svg class="a" style="left:942px;top:53px;z-index:1" width="16" height="16"><rect x="0.5" y="0.5" width="15" height="15" fill="none" stroke="#333" stroke-dasharray="2 1.5"/><rect x="3.5" y="3.5" width="9" height="9" fill="#fff" stroke="#333"/><rect x="3" y="3" width="10" height="2.5" fill="#1a5fc6"/></svg><svg class="a" style="left:970px;top:53px;z-index:1" width="16" height="16"><rect x="0.5" y="0.5" width="15" height="15" fill="none" stroke="#333" stroke-dasharray="2 1.5"/><rect x="2.5" y="2.5" width="8" height="7" fill="#fff" stroke="#333"/><rect x="5.5" y="5.5" width="8" height="8" fill="#fff" stroke="#333"/><rect x="5" y="5" width="9" height="2" fill="#1a5fc6"/></svg><svg class="a" style="left:998px;top:53px;z-index:1" width="16" height="16"><rect x="0.5" y="0.5" width="15" height="15" fill="#fff" stroke="#333"/><rect x="0" y="0" width="16" height="3" fill="#1a5fc6"/><path d="M10 9L15 14M15 10V15H11" stroke="#1a5fc6" stroke-width="1.5" fill="none"/></svg><div class="a" style="left:1023px;top:50px;width:1px;height:22px;background:#b8b8b8"></div><svg class="a" style="left:1032px;top:53px;z-index:1" width="16" height="16"><rect x="0.5" y="0.5" width="15" height="15" fill="#fff" stroke="#333"/><rect x="0" y="0" width="16" height="3" fill="#1a5fc6"/><path d="M0.5 8.5H8.5V15.5" stroke="#333" fill="none"/><path d="M9 8L14 3M10 3H14V7" stroke="#1a5fc6" stroke-width="1.5" fill="none"/></svg><svg class="a" style="left:1060px;top:53px;z-index:1" width="16" height="16"><path d="M0 3V0H3M13 0H16V3M0 13V16H3M16 13V16H13" stroke="#333" stroke-width="1.5" fill="none"/><rect x="2.5" y="2.5" width="11" height="11" fill="#fff" stroke="#333"/><rect x="2" y="2" width="12" height="3" fill="#1a5fc6"/></svg><svg class="a" style="left:1088px;top:50px" width="6" height="22"><pattern id="gp1088_50" width="4" height="4" patternUnits="userSpaceOnUse"><rect x="0" y="0" width="2" height="2" fill="#909090"/><rect x="2" y="2" width="2" height="2" fill="#909090"/><rect x="1" y="1" width="1" height="1" fill="#c8c8c8"/><rect x="3" y="3" width="1" height="1" fill="#c8c8c8"/></pattern><rect x="0" y="0" width="6" height="22" fill="url(#gp1088_50)"/></svg><svg class="a" style="left:1106px;top:53px;z-index:1" width="16" height="16"><path d="M3 1H15V15H3Z" fill="#fff" stroke="#444"/><path d="M0 4L4 0V16H0Z" fill="#444"/><circle cx="11" cy="11" r="4.5" fill="#1a9e5a"/><path d="M8.5 11H13.5M11 8.5V13.5" stroke="#fff" stroke-width="1.5"/></svg><svg class="a" style="left:1134px;top:53px;z-index:1" width="16" height="16"><path d="M3 1H15V15H3Z" fill="#f4f0ee" stroke="#8a8a8a"/><path d="M0 4L4 0V16H0Z" fill="#8a8a8a"/><path d="M6 14L14 6" stroke="#8a8a8a" stroke-width="3"/></svg><svg class="a" style="left:1162px;top:53px;z-index:1" width="16" height="16"><path d="M3 1H15V15H3Z" fill="#f4f0ee" stroke="#8a8a8a"/><path d="M0 4L4 0V16H0Z" fill="#8a8a8a"/><circle cx="11" cy="11" r="4.5" fill="#999"/><path d="M8.5 11H13.5M11 8.5V13.5" stroke="#fff" stroke-width="1.5"/></svg><svg class="a" style="left:1190px;top:53px;z-index:1" width="16" height="16"><path d="M3 1H15V15H3Z" fill="#f4f0ee" stroke="#8a8a8a"/><path d="M0 4L4 0V16H0Z" fill="#8a8a8a"/><circle cx="11" cy="11" r="4.5" fill="#999"/><path d="M8.5 11H13.5M11 8.5V13.5" stroke="#fff" stroke-width="1.5"/></svg><div class="a" style="left:1214px;top:50px;width:1px;height:22px;background:#b8b8b8"></div><div class="a" style="left:1220px;top:49px;width:24px;height:24px;background:#fff;border:1px solid #888"></div><svg class="a" style="left:1224px;top:53px;z-index:1" width="16" height="16"><path d="M3 1H15V15H3Z" fill="#fff" stroke="#444"/><path d="M0 4L4 0V16H0Z" fill="#444"/><circle cx="11" cy="10" r="3" fill="none" stroke="#1a5fc6" stroke-width="1.8"/><path d="M9 12L6 15" stroke="#1a5fc6" stroke-width="2"/></svg><div class="a" style="left:1248px;top:50px;width:1px;height:22px;background:#b8b8b8"></div><svg class="a" style="left:1258px;top:53px;z-index:1" width="16" height="16"><path d="M3 1H15V15H3Z" fill="#f4f0ee" stroke="#8a8a8a"/><path d="M0 4L4 0V16H0Z" fill="#8a8a8a"/><path d="M10 5V13M6.5 10L10 14L13.5 10" stroke="#8a8a8a" stroke-width="2" fill="none"/></svg><svg class="a" style="left:1286px;top:53px;z-index:1" width="16" height="16"><path d="M3 1H15V15H3Z" fill="#f4f0ee" stroke="#8a8a8a"/><path d="M0 4L4 0V16H0Z" fill="#8a8a8a"/><path d="M10 15V7M6.5 10L10 6L13.5 10" stroke="#8a8a8a" stroke-width="2" fill="none"/></svg><div class="a" style="left:1310px;top:50px;width:1px;height:22px;background:#b8b8b8"></div><svg class="a" style="left:1320px;top:53px;z-index:1" width="16" height="16"><path d="M3 1H15V15H3Z" fill="#f4f0ee" stroke="#8a8a8a"/><path d="M0 4L4 0V16H0Z" fill="#8a8a8a"/><path d="M7 9A3.5 3.5 0 1 1 10 12.5" stroke="#8a8a8a" stroke-width="1.8" fill="none"/><path d="M5 7L8 10H5Z" fill="#8a8a8a"/></svg><div class="a" style="left:1344px;top:50px;width:1px;height:22px;background:#b8b8b8"></div><svg class="a" style="left:1354px;top:53px;z-index:1" width="16" height="16"><path d="M3 1H15V15H3Z" fill="#f4f0ee" stroke="#8a8a8a"/><path d="M0 4L4 0V16H0Z" fill="#8a8a8a"/><circle cx="10" cy="11" r="4.2" fill="none" stroke="#8a8a8a" stroke-width="1.8" stroke-dasharray="2 1.3"/><circle cx="10" cy="11" r="3" fill="#8a8a8a"/><circle cx="10" cy="11" r="1.1" fill="#f4f0ee"/></svg><svg class="a" style="left:1382px;top:53px;z-index:1" width="16" height="16"><path d="M3 1H15V15H3Z" fill="#f4f0ee" stroke="#8a8a8a"/><path d="M0 4L4 0V16H0Z" fill="#8a8a8a"/><path d="M12.5 8A4 4 0 1 1 8 7" stroke="#8a8a8a" stroke-width="2" fill="none"/></svg><svg class="a" style="left:1410px;top:53px;z-index:1" width="16" height="16"><path d="M3 1H15V15H3Z" fill="#f4f0ee" stroke="#8a8a8a"/><path d="M0 4L4 0V16H0Z" fill="#8a8a8a"/><circle cx="11" cy="11" r="4.5" fill="#8a8a8a"/><path d="M9 9L13 13M13 9L9 13" stroke="#eee" stroke-width="1.3"/></svg><svg class="a" style="left:6px;top:78px" width="6" height="22"><pattern id="gp6_78" width="4" height="4" patternUnits="userSpaceOnUse"><rect x="0" y="0" width="2" height="2" fill="#909090"/><rect x="2" y="2" width="2" height="2" fill="#909090"/><rect x="1" y="1" width="1" height="1" fill="#c8c8c8"/><rect x="3" y="3" width="1" height="1" fill="#c8c8c8"/></pattern><rect x="0" y="0" width="6" height="22" fill="url(#gp6_78)"/></svg><svg class="a" style="left:24px;top:81px;z-index:1" width="16" height="16"><rect x="0.7" y="0.7" width="3.2" height="3.2" fill="#fff" stroke="#505050" stroke-width="1.2"/><rect x="6.7" y="0.7" width="3.2" height="3.2" fill="#fff" stroke="#505050" stroke-width="1.2"/><rect x="12.7" y="0.7" width="3.2" height="3.2" fill="#fff" stroke="#505050" stroke-width="1.2"/><rect x="0.7" y="6.7" width="3.2" height="3.2" fill="#fff" stroke="#505050" stroke-width="1.2"/><rect x="0.7" y="12.7" width="3.2" height="3.2" fill="#fff" stroke="#505050" stroke-width="1.2"/><circle cx="11" cy="11" r="5" fill="#1a9e5a"/><path d="M9 9L13 13M13 10V13H10" stroke="#fff" stroke-width="1.5" fill="none"/></svg><svg class="a" style="left:52px;top:81px;z-index:1" width="16" height="16"><rect x="0.7" y="0.7" width="3.2" height="3.2" fill="#fff" stroke="#505050" stroke-width="1.2"/><rect x="6.7" y="0.7" width="3.2" height="3.2" fill="#fff" stroke="#505050" stroke-width="1.2"/><rect x="12.7" y="0.7" width="3.2" height="3.2" fill="#fff" stroke="#505050" stroke-width="1.2"/><rect x="0.7" y="6.7" width="3.2" height="3.2" fill="#fff" stroke="#505050" stroke-width="1.2"/><rect x="0.7" y="12.7" width="3.2" height="3.2" fill="#fff" stroke="#505050" stroke-width="1.2"/><circle cx="11" cy="11" r="4.5" fill="#1a9e5a"/><path d="M8.5 11H13.5M11 8.5V13.5" stroke="#fff" stroke-width="1.5"/></svg><svg class="a" style="left:80px;top:81px;z-index:1" width="16" height="16"><rect x="0.7" y="0.7" width="3.2" height="3.2" fill="#fff" stroke="#505050" stroke-width="1.2"/><rect x="6.7" y="0.7" width="3.2" height="3.2" fill="#fff" stroke="#505050" stroke-width="1.2"/><rect x="12.7" y="0.7" width="3.2" height="3.2" fill="#fff" stroke="#505050" stroke-width="1.2"/><rect x="0.7" y="6.7" width="3.2" height="3.2" fill="#fff" stroke="#505050" stroke-width="1.2"/><rect x="0.7" y="12.7" width="3.2" height="3.2" fill="#fff" stroke="#505050" stroke-width="1.2"/><rect x="7.5" y="7.5" width="8" height="8" fill="#fff" stroke="#8a2ac8" stroke-width="1.5"/><rect x="9" y="8" width="5" height="2" fill="#8a2ac8"/></svg><svg class="a" style="left:108px;top:81px;z-index:1" width="16" height="16"><rect x="0.7" y="0.7" width="3.2" height="3.2" fill="#fff" stroke="#505050" stroke-width="1.2"/><rect x="6.7" y="0.7" width="3.2" height="3.2" fill="#fff" stroke="#505050" stroke-width="1.2"/><rect x="12.7" y="0.7" width="3.2" height="3.2" fill="#fff" stroke="#505050" stroke-width="1.2"/><rect x="0.7" y="6.7" width="3.2" height="3.2" fill="#fff" stroke="#505050" stroke-width="1.2"/><rect x="0.7" y="12.7" width="3.2" height="3.2" fill="#fff" stroke="#505050" stroke-width="1.2"/><rect x="7" y="7" width="9" height="9" fill="#fff" stroke="#444"/><rect x="7" y="7" width="9" height="2" fill="#1a9e5a"/><path d="M9 11H14M9 13.5H14" stroke="#444"/></svg><div class="a" style="left:132px;top:78px;width:1px;height:22px;background:#b8b8b8"></div><svg class="a" style="left:142px;top:81px;z-index:1" width="16" height="16"><rect x="0.7" y="0.7" width="3.2" height="3.2" fill="#fff" stroke="#a0a0a0" stroke-width="1.2"/><rect x="6.7" y="0.7" width="3.2" height="3.2" fill="#fff" stroke="#a0a0a0" stroke-width="1.2"/><rect x="12.7" y="0.7" width="3.2" height="3.2" fill="#fff" stroke="#a0a0a0" stroke-width="1.2"/><rect x="0.7" y="6.7" width="3.2" height="3.2" fill="#fff" stroke="#a0a0a0" stroke-width="1.2"/><rect x="0.7" y="12.7" width="3.2" height="3.2" fill="#fff" stroke="#a0a0a0" stroke-width="1.2"/><rect x="7.5" y="7.5" width="8" height="8" fill="#f0f0f0" stroke="#a0a0a0" stroke-width="1.5"/></svg><div class="a" style="left:166px;top:78px;width:1px;height:22px;background:#b8b8b8"></div><svg class="a" style="left:176px;top:81px;z-index:1" width="16" height="16"><rect x="0.7" y="0.7" width="3.2" height="3.2" fill="#fff" stroke="#505050" stroke-width="1.2"/><rect x="6.7" y="0.7" width="3.2" height="3.2" fill="#fff" stroke="#505050" stroke-width="1.2"/><rect x="12.7" y="0.7" width="3.2" height="3.2" fill="#fff" stroke="#505050" stroke-width="1.2"/><rect x="0.7" y="6.7" width="3.2" height="3.2" fill="#fff" stroke="#505050" stroke-width="1.2"/><rect x="0.7" y="12.7" width="3.2" height="3.2" fill="#fff" stroke="#505050" stroke-width="1.2"/><circle cx="11" cy="11" r="4.8" fill="#e02020"/><path d="M9 9L13 13M13 9L9 13" stroke="#fff" stroke-width="1.5"/></svg><svg class="a" style="left:204px;top:78px" width="6" height="22"><pattern id="gp204_78" width="4" height="4" patternUnits="userSpaceOnUse"><rect x="0" y="0" width="2" height="2" fill="#909090"/><rect x="2" y="2" width="2" height="2" fill="#909090"/><rect x="1" y="1" width="1" height="1" fill="#c8c8c8"/><rect x="3" y="3" width="1" height="1" fill="#c8c8c8"/></pattern><rect x="0" y="0" width="6" height="22" fill="url(#gp204_78)"/></svg><svg class="a" style="left:222px;top:81px;z-index:1" width="16" height="16"><path d="M1 5L8 1L15 5V11L8 15L1 11Z" fill="none" stroke="#1aa02a" stroke-width="2"/><path d="M1 5L8 9L15 5M8 9V15" stroke="#1aa02a" stroke-width="1.5" fill="none"/><circle cx="12" cy="12" r="4.3" fill="#1a9e5a"/><path d="M10 10L14 14M14 11V14H11" stroke="#fff" stroke-width="1.3" fill="none"/></svg><svg class="a" style="left:250px;top:81px;z-index:1" width="16" height="16"><path d="M1 5L8 1L15 5V11L8 15L1 11Z" fill="none" stroke="#1aa02a" stroke-width="2"/><path d="M1 5L8 9L15 5M8 9V15" stroke="#1aa02a" stroke-width="1.5" fill="none"/><rect x="8" y="8" width="8" height="8" fill="#fff" stroke="#8a2ac8" stroke-width="1.5"/></svg><svg class="a" style="left:278px;top:81px;z-index:1" width="16" height="16"><path d="M1 5L8 1L15 5V11L8 15L1 11Z" fill="none" stroke="#1aa02a" stroke-width="2"/><path d="M1 5L8 9L15 5M8 9V15" stroke="#1aa02a" stroke-width="1.5" fill="none"/><rect x="8" y="8" width="8" height="8" fill="#fff" stroke="#444"/><path d="M9.5 11H14.5M9.5 13.5H14.5" stroke="#444"/></svg><svg class="a" style="left:306px;top:78px" width="6" height="22"><pattern id="gp306_78" width="4" height="4" patternUnits="userSpaceOnUse"><rect x="0" y="0" width="2" height="2" fill="#909090"/><rect x="2" y="2" width="2" height="2" fill="#909090"/><rect x="1" y="1" width="1" height="1" fill="#c8c8c8"/><rect x="3" y="3" width="1" height="1" fill="#c8c8c8"/></pattern><rect x="0" y="0" width="6" height="22" fill="url(#gp306_78)"/></svg><svg class="a" style="left:325px;top:81px;z-index:1" width="16" height="16"><path d="M1 2L7 7H1Z" fill="#1010e0"/><path d="M1.5 7V11.5H13.5V9.5A3.5 3.5 0 0 0 10 6H7" stroke="#1010e0" stroke-width="1.3" fill="none"/><path d="M7 11V13.5" stroke="#1010e0" stroke-width="1.3"/></svg><svg class="a" style="left:352px;top:81px;z-index:1" width="16" height="16"><rect x="1.5" y="3.5" width="10" height="9" fill="none" stroke="#1010e0" stroke-width="1.5"/><path d="M4 6L10 12H5Z" fill="#1010e0"/></svg><svg class="a" style="left:380px;top:81px;z-index:1" width="16" height="16"><rect x="1.5" y="3.5" width="10" height="9" fill="none" stroke="#1010e0" stroke-width="1.5"/><path d="M5 10L11 4V9Z" fill="#1010e0"/></svg><svg class="a" style="left:408px;top:81px;z-index:1" width="16" height="16"><path d="M1 14L6 2V14Z" fill="none" stroke="#1010e0" stroke-width="1.5"/><path d="M15 14L10 2V14Z" fill="none" stroke="#1010e0" stroke-width="1.5"/><path d="M8 1V15" stroke="#c8c870" stroke-dasharray="1 1"/></svg><svg class="a" style="left:436px;top:81px;z-index:1" width="16" height="16"><path d="M2 6L8 1L14 6Z" fill="none" stroke="#1010e0" stroke-width="1.3"/><path d="M2 10L8 15L14 10Z" fill="none" stroke="#1010e0" stroke-width="1.3"/><path d="M1 8H15" stroke="#1010e0" stroke-dasharray="1 1"/></svg><svg class="a" style="left:464px;top:78px" width="6" height="22"><pattern id="gp464_78" width="4" height="4" patternUnits="userSpaceOnUse"><rect x="0" y="0" width="2" height="2" fill="#909090"/><rect x="2" y="2" width="2" height="2" fill="#909090"/><rect x="1" y="1" width="1" height="1" fill="#c8c8c8"/><rect x="3" y="3" width="1" height="1" fill="#c8c8c8"/></pattern><rect x="0" y="0" width="6" height="22" fill="url(#gp464_78)"/></svg><svg class="a" style="left:483px;top:81px;z-index:1" width="15" height="15"><rect x="0.5" y="0.5" width="14" height="14" fill="#f4f4f4" stroke="#555"/><rect x="2" y="2" width="8" height="8" fill="#999"/><rect x="5" y="5" width="8" height="8" fill="#aaa"/></svg><svg class="a" style="left:511px;top:81px;z-index:1" width="15" height="15"><rect x="0.5" y="0.5" width="14" height="14" fill="#f4f4f4" stroke="#555"/><path d="M3 3L12 12M12 3L3 12" stroke="#555" stroke-width="1.5"/></svg><svg class="a" style="left:539px;top:81px;z-index:1" width="15" height="15"><rect x="0.5" y="0.5" width="14" height="14" fill="#8a8686" stroke="#555"/></svg><svg class="a" style="left:567px;top:81px;z-index:1" width="15" height="15"><rect x="0.5" y="0.5" width="14" height="14" fill="#a8a4a2" stroke="#555"/></svg><svg class="a" style="left:595px;top:81px;z-index:1" width="15" height="15"><rect x="0.5" y="0.5" width="14" height="14" fill="#706c6a" stroke="#555"/></svg><svg class="a" style="left:623px;top:81px;z-index:1" width="15" height="15"><rect x="0.5" y="0.5" width="14" height="14" fill="#d8d4d2" stroke="#555"/></svg><svg class="a" style="left:651px;top:81px;z-index:1" width="15" height="15"><rect x="0.5" y="0.5" width="14" height="14" fill="#a09c9a" stroke="#555"/></svg><svg class="a" style="left:679px;top:81px;z-index:1" width="15" height="15"><rect x="0.5" y="0.5" width="14" height="14" fill="#b8b4b2" stroke="#555"/></svg><svg class="a" style="left:707px;top:81px;z-index:1" width="15" height="15"><rect x="0.5" y="0.5" width="14" height="14" fill="#b0acaa" stroke="#555"/></svg><svg class="a" style="left:735px;top:81px;z-index:1" width="15" height="15"><rect x="0.5" y="0.5" width="14" height="14" fill="#8c8888" stroke="#555"/></svg><svg class="a" style="left:762px;top:78px" width="6" height="22"><pattern id="gp762_78" width="4" height="4" patternUnits="userSpaceOnUse"><rect x="0" y="0" width="2" height="2" fill="#909090"/><rect x="2" y="2" width="2" height="2" fill="#909090"/><rect x="1" y="1" width="1" height="1" fill="#c8c8c8"/><rect x="3" y="3" width="1" height="1" fill="#c8c8c8"/></pattern><rect x="0" y="0" width="6" height="22" fill="url(#gp762_78)"/></svg><svg class="a" style="left:781px;top:81px;z-index:1" width="15" height="15"><defs><linearGradient id="gg4" x1="0" y1="0" x2="1" y2="1"><stop offset="0" stop-color="#888"/><stop offset="1" stop-color="#eee"/></linearGradient></defs><rect x="0.5" y="0.5" width="14" height="14" fill="url(#gg4)" stroke="#555"/></svg><svg class="a" style="left:809px;top:81px;z-index:1" width="15" height="15"><defs><linearGradient id="gg5" x1="0" y1="0" x2="1" y2="1"><stop offset="0.25" stop-color="#f00"/><stop offset="0.45" stop-color="#0f0"/><stop offset="0.62" stop-color="#0f0"/><stop offset="0.8" stop-color="#66f"/></linearGradient></defs><rect x="0.5" y="0.5" width="14" height="14" fill="url(#gg5)" stroke="#000" stroke-width="1.5"/></svg><svg class="a" style="left:836px;top:78px" width="6" height="22"><pattern id="gp836_78" width="4" height="4" patternUnits="userSpaceOnUse"><rect x="0" y="0" width="2" height="2" fill="#909090"/><rect x="2" y="2" width="2" height="2" fill="#909090"/><rect x="1" y="1" width="1" height="1" fill="#c8c8c8"/><rect x="3" y="3" width="1" height="1" fill="#c8c8c8"/></pattern><rect x="0" y="0" width="6" height="22" fill="url(#gp836_78)"/></svg><svg class="a" style="left:854px;top:81px;z-index:1" width="16" height="16"><rect x="0.5" y="0.5" width="15" height="15" fill="#fff" stroke="#444"/><defs><pattern id="ck1" width="2" height="2" patternUnits="userSpaceOnUse"><rect width="1" height="1" fill="#444"/><rect x="1" y="1" width="1" height="1" fill="#444"/><rect x="1" width="1" height="1" fill="#fff"/><rect y="1" width="1" height="1" fill="#fff"/></pattern></defs><rect x="1" y="3" width="8" height="12" fill="url(#ck1)"/><rect x="0" y="0" width="16" height="3" fill="#1a5fc6"/></svg><svg class="a" style="left:882px;top:81px;z-index:1" width="16" height="16"><rect x="0" y="0" width="16" height="16" fill="#a8a8a8"/><defs><pattern id="ck2" width="2" height="2" patternUnits="userSpaceOnUse"><rect width="1" height="1" fill="#a8a8a8"/><rect x="1" y="1" width="1" height="1" fill="#a8a8a8"/><rect x="1" width="1" height="1" fill="#e8e8e8"/><rect y="1" width="1" height="1" fill="#e8e8e8"/></pattern></defs><rect x="1" y="2" width="14" height="13" fill="url(#ck2)"/><circle cx="11" cy="11" r="4.5" fill="#999" stroke="#eee" stroke-width="0.8"/><path d="M9 9L13 13M13 9L9 13" stroke="#eee" stroke-width="1.3"/></svg><div class="a" style="left:907px;top:78px;width:1px;height:22px;background:#b8b8b8"></div><svg class="a" style="left:916px;top:81px;z-index:1" width="16" height="16"><rect x="0" y="0" width="16" height="16" fill="#a8a8a8"/><defs><pattern id="ck3" width="2" height="2" patternUnits="userSpaceOnUse"><rect width="1" height="1" fill="#a8a8a8"/><rect x="1" y="1" width="1" height="1" fill="#a8a8a8"/><rect x="1" width="1" height="1" fill="#e8e8e8"/><rect y="1" width="1" height="1" fill="#e8e8e8"/></pattern></defs><rect x="1" y="2" width="14" height="13" fill="url(#ck3)"/><circle cx="11" cy="11" r="4.5" fill="#999" stroke="#eee" stroke-width="0.8"/></svg><svg class="a" style="left:944px;top:81px;z-index:1" width="16" height="16"><rect x="0" y="0" width="16" height="16" fill="#a8a8a8"/><defs><pattern id="ck4" width="2" height="2" patternUnits="userSpaceOnUse"><rect width="1" height="1" fill="#a8a8a8"/><rect x="1" y="1" width="1" height="1" fill="#a8a8a8"/><rect x="1" width="1" height="1" fill="#e8e8e8"/><rect y="1" width="1" height="1" fill="#e8e8e8"/></pattern></defs><rect x="1" y="2" width="14" height="13" fill="url(#ck4)"/><circle cx="11" cy="11" r="4.5" fill="#999" stroke="#eee" stroke-width="0.8"/></svg><svg class="a" style="left:972px;top:81px;z-index:1" width="16" height="16"><rect x="0" y="0" width="16" height="16" fill="#a8a8a8"/><defs><pattern id="ck5" width="2" height="2" patternUnits="userSpaceOnUse"><rect width="1" height="1" fill="#a8a8a8"/><rect x="1" y="1" width="1" height="1" fill="#a8a8a8"/><rect x="1" width="1" height="1" fill="#e8e8e8"/><rect y="1" width="1" height="1" fill="#e8e8e8"/></pattern></defs><rect x="1" y="2" width="14" height="13" fill="url(#ck5)"/><circle cx="11" cy="11" r="4.5" fill="#999" stroke="#eee" stroke-width="0.8"/></svg><svg class="a" style="left:1000px;top:78px" width="6" height="22"><pattern id="gp1000_78" width="4" height="4" patternUnits="userSpaceOnUse"><rect x="0" y="0" width="2" height="2" fill="#909090"/><rect x="2" y="2" width="2" height="2" fill="#909090"/><rect x="1" y="1" width="1" height="1" fill="#c8c8c8"/><rect x="3" y="3" width="1" height="1" fill="#c8c8c8"/></pattern><rect x="0" y="0" width="6" height="22" fill="url(#gp1000_78)"/></svg><div class="a" style="left:1014px;top:77px;width:24px;height:24px;background:#fff;border:1px solid #888"></div><svg class="a" style="left:1018px;top:81px;z-index:1" width="16" height="16"><rect x="1" y="1" width="14" height="10" fill="#fff" stroke="#1a5fc6" stroke-width="2"/><path d="M8 11V14M4 15H12" stroke="#1a5fc6" stroke-width="2"/></svg><svg class="a" style="left:1046px;top:81px;z-index:1" width="16" height="16"><rect x="1" y="1" width="14" height="10" fill="#fff" stroke="#1a5fc6" stroke-width="2"/><path d="M8 11V14M4 15H12" stroke="#1a5fc6" stroke-width="2"/><text x="5" y="16" font-family="Liberation Sans" font-weight="bold" font-size="10" fill="#f0c020" stroke="#000" stroke-width="0.6">24</text></svg><div class="a" style="left:1070px;top:78px;width:1px;height:22px;background:#b8b8b8"></div><svg class="a" style="left:1080px;top:81px;z-index:1" width="16" height="16"><rect x="1" y="1" width="14" height="13" fill="#fff" stroke="#444"/><path d="M1 1H15V8" stroke="#1a5fc6" stroke-width="2" fill="none"/><path d="M15 11H8M11 8L8 11L11 14" stroke="#1a5fc6" stroke-width="2" fill="none"/></svg><div class="a" style="left:1104px;top:78px;width:1px;height:22px;background:#b8b8b8"></div><svg class="a" style="left:1114px;top:81px;z-index:1" width="16" height="16"><rect x="1" y="1" width="14" height="10" fill="#fff" stroke="#1a5fc6" stroke-width="2"/><path d="M8 11V14M4 15H12" stroke="#1a5fc6" stroke-width="2"/><circle cx="12" cy="12" r="4.3" fill="#e02020"/><path d="M10 10L14 14M14 10L10 14" stroke="#fff" stroke-width="1.5"/></svg><svg class="a" style="left:1142px;top:81px;z-index:1" width="16" height="16"><rect x="1" y="1" width="14" height="10" fill="#fff" stroke="#1a5fc6" stroke-width="2"/><path d="M8 11V14M4 15H12" stroke="#1a5fc6" stroke-width="2"/><rect x="1" y="8" width="7" height="7" fill="#fff" stroke="#444"/><circle cx="12" cy="12" r="4.3" fill="#e02020"/><path d="M10 10L14 14M14 10L10 14" stroke="#fff" stroke-width="1.5"/></svg><div class="a" style="left:1166px;top:78px;width:1px;height:22px;background:#b8b8b8"></div><svg class="a" style="left:1176px;top:81px;z-index:1" width="16" height="16"><rect x="1" y="1" width="14" height="10" fill="#fff" stroke="#1a5fc6" stroke-width="2"/><path d="M8 11V14M4 15H12" stroke="#1a5fc6" stroke-width="2"/><circle cx="12" cy="12" r="4.3" fill="#f0b020"/><circle cx="12" cy="12" r="1" fill="#222"/><path d="M12 12L9 8.5A4 4 0 0 1 15 8.5Z M12 12L8 13A4 4 0 0 0 11 16Z M12 12L13 16A4 4 0 0 0 16 13Z" fill="#222"/></svg><svg class="a" style="left:1204px;top:81px;z-index:1" width="16" height="16"><rect x="1" y="1" width="14" height="10" fill="#fff" stroke="#1a5fc6" stroke-width="2"/><path d="M8 11V14M4 15H12" stroke="#1a5fc6" stroke-width="2"/><circle cx="12" cy="12" r="4.3" fill="#f0b020"/><path d="M12 12L9 8.5A4 4 0 0 1 15 8.5Z M12 12L8 13A4 4 0 0 0 11 16Z M12 12L13 16A4 4 0 0 0 16 13Z" fill="#222"/><path d="M12 0L15 4H9Z" fill="#222"/><path d="M12 3V7" stroke="#222" stroke-width="2"/></svg><svg class="a" style="left:3px;top:2px" width="14" height="15"><defs><linearGradient id="appg" x1="0" y1="0" x2="0" y2="1"><stop offset="0" stop-color="#0000f8"/><stop offset="1" stop-color="#5060ff"/></linearGradient></defs><path d="M7 0.5L13 5V11L7 15L1 11V5Z" fill="url(#appg)"/><path d="M3.5 6.5L7 9L10.5 6.5M7 9V14.5" stroke="#c8d0ff" stroke-width="1.6" fill="none"/></svg><svg class="a" style="left:24px;top:2px" width="16" height="17"><defs><radialGradient id="tb32" cx="0.5" cy="0.3" r="0.75"><stop offset="0" stop-color="#fdfdfd"/><stop offset="0.7" stop-color="#e4e2e0"/><stop offset="1" stop-color="#cfcbc8"/></radialGradient></defs><circle cx="8" cy="8.8" r="7" fill="#9a9692"/><circle cx="8" cy="8" r="7" fill="url(#tb32)" stroke="#b4b0ac" stroke-width="0.6"/></svg><svg class="a" style="left:1855px;top:2px" width="16" height="17"><defs><radialGradient id="tb1863" cx="0.5" cy="0.3" r="0.75"><stop offset="0" stop-color="#fdfdfd"/><stop offset="0.7" stop-color="#e4e2e0"/><stop offset="1" stop-color="#cfcbc8"/></radialGradient></defs><circle cx="8" cy="8.8" r="7" fill="#9a9692"/><circle cx="8" cy="8" r="7" fill="url(#tb1863)" stroke="#b4b0ac" stroke-width="0.6"/><path d="M4.8 6.5L8 9.7L11.2 6.5" fill="none" stroke="#707070" stroke-width="1"/></svg><svg class="a" style="left:1878px;top:2px" width="16" height="17"><defs><radialGradient id="tb1886" cx="0.5" cy="0.3" r="0.75"><stop offset="0" stop-color="#fdfdfd"/><stop offset="0.7" stop-color="#e4e2e0"/><stop offset="1" stop-color="#cfcbc8"/></radialGradient></defs><circle cx="8" cy="8.8" r="7" fill="#9a9692"/><circle cx="8" cy="8" r="7" fill="url(#tb1886)" stroke="#b4b0ac" stroke-width="0.6"/><path d="M8 4.8L11.2 8L8 11.2L4.8 8Z" fill="none" stroke="#707070" stroke-width="1"/></svg><svg class="a" style="left:1901px;top:2px" width="16" height="17"><defs><radialGradient id="tb1909" cx="0.5" cy="0.3" r="0.75"><stop offset="0" stop-color="#fdfdfd"/><stop offset="0.7" stop-color="#e4e2e0"/><stop offset="1" stop-color="#cfcbc8"/></radialGradient></defs><circle cx="8" cy="8.8" r="7" fill="#9a9692"/><circle cx="8" cy="8" r="7" fill="url(#tb1909)" stroke="#b4b0ac" stroke-width="0.6"/><path d="M5 5L11 11M11 5L5 11" fill="none" stroke="#707070" stroke-width="1"/></svg><div class="a" style="left:1px;top:104px;width:25px;height:106px;background:#4b4b4b"></div><div class="a t" style="left:-87px;top:144.0px;width:200px;height:14px;line-height:14px;text-align:center;transform:rotate(-90deg);font-size:12px;color:#dcdcdc;letter-spacing:0px">View Explorer</div><div class="a" style="left:5px;top:191px;width:14px;height:14px;background:#4aa0ff;border:1px solid #1a2a40"></div><div class="a" style="left:1px;top:210px;width:25px;height:2px;background:#6a6a6a"></div><div class="a" style="left:1px;top:212px;width:25px;height:118px;background:#4b4b4b"></div><div class="a t" style="left:-87px;top:256.5px;width:200px;height:14px;line-height:14px;text-align:center;transform:rotate(-90deg);font-size:12px;color:#dcdcdc;letter-spacing:0px">Format Explorer</div><div class="a" style="left:5px;top:311px;width:15px;height:15px;background:#d855d8;border:1px solid #402040;border-radius:50%"></div><div class="a" style="left:1px;top:715px;width:25px;height:114px;background:#4b4b4b"></div><div class="a t" style="left:-87px;top:758.5px;width:200px;height:14px;line-height:14px;text-align:center;transform:rotate(-90deg);font-size:12px;color:#dcdcdc;letter-spacing:0px">Object Explorer</div><svg class="a" style="left:5px;top:810px" width="16" height="16"><path d="M8 1L15 4.5V11.5L8 15L1 11.5V4.5Z" fill="#60c040" stroke="#203010"/><path d="M1 4.5L8 8L15 4.5M8 8V15" stroke="#203010" fill="none"/><path d="M8 1L15 4.5L8 8L1 4.5Z" fill="#90e060"/></svg><div class="a" style="left:1px;top:829px;width:25px;height:2px;background:#6a6a6a"></div><div class="a" style="left:1px;top:831px;width:25px;height:99px;background:#4b4b4b"></div><div class="a t" style="left:-87px;top:869.5px;width:200px;height:14px;line-height:14px;text-align:center;transform:rotate(-90deg);font-size:12px;color:#dcdcdc;letter-spacing:0px">Script Editor</div><svg class="a" style="left:5px;top:912px" width="16" height="16"><path d="M1 1H9L15 7V15H1Z" fill="#20c0a0" stroke="#103830"/></svg><div class="a" style="left:1px;top:930px;width:25px;height:2px;background:#6a6a6a"></div><div class="a" style="left:1px;top:932px;width:25px;height:119px;background:#4b4b4b"></div><div class="a t" style="left:-87px;top:978.0px;width:200px;height:14px;line-height:14px;text-align:center;transform:rotate(-90deg);font-size:12px;color:#dcdcdc;letter-spacing:0px">History Explorer</div><svg class="a" style="left:4px;top:1031px" width="18" height="16"><path d="M9 1L17 10L9 15L1 10Z" fill="#f89040" stroke="#301000"/><path d="M9 1V15" stroke="#301000"/></svg><div class="a" style="left:1894px;top:104px;width:25px;height:120px;background:#4b4b4b"></div><div class="a t" style="left:1807px;top:149.0px;width:200px;height:14px;line-height:14px;text-align:center;transform:rotate(-90deg);font-size:12px;color:#dcdcdc;letter-spacing:0px">Process Explorer</div><svg class="a" style="left:1899px;top:205px" width="16" height="16"><circle cx="8" cy="8" r="5" fill="none" stroke="#f0f0f0" stroke-width="2.2"/><circle cx="8" cy="8" r="7" fill="none" stroke="#f0f0f0" stroke-width="2.5" stroke-dasharray="2.2 1.5"/></svg><div class="a" style="left:1894px;top:832px;width:25px;height:118px;background:#4b4b4b"></div><div class="a t" style="left:1807px;top:877.0px;width:200px;height:14px;line-height:14px;text-align:center;transform:rotate(-90deg);font-size:12px;color:#dcdcdc;letter-spacing:0px">Process Console</div><svg class="a" style="left:1898px;top:930px" width="18" height="17"><path d="M1 2L17 8.5L4 16Z" fill="#f06040" stroke="#300" stroke-width="1"/><path d="M1 2L9 9L4 16M9 9L17 8.5" stroke="#300" fill="none"/></svg><div class="a" style="left:1894px;top:950px;width:26px;height:2px;background:#6a6a6a"></div><div class="a" style="left:1894px;top:952px;width:25px;height:99px;background:#4b4b4b"></div><div class="a t" style="left:1807px;top:989.0px;width:200px;height:14px;line-height:14px;text-align:center;transform:rotate(-90deg);font-size:12px;color:#dcdcdc;letter-spacing:0px">File Explorer</div><svg class="a" style="left:1899px;top:1032px" width="16" height="16"><path d="M1 3V13A7 2.5 0 0 0 15 13V3Z" fill="#d8c49a" stroke="#403020"/><ellipse cx="8" cy="3" rx="7" ry="2.5" fill="#e8d8b0" stroke="#403020"/></svg><div class="a" style="left:1696px;top:106px;width:100px;height:28px;background:#3a3a3a"></div><div class="a" style="left:1697px;top:107px;width:98px;height:26px;background:#b4b4b4"></div><div class="a" style="left:1698px;top:108px;width:24px;height:24px;overflow:hidden"><div class="a" style="left:0;top:0;width:24px;height:24px;background:linear-gradient(135deg,#20b0ff,#0030f0)"></div><div class="a t" style="left:4px;top:1px;font-size:22px;font-weight:bold;color:#ff9a40">S</div></div><div class="a t" style="left:1726px;top:114px;font-size:11.5px;color:#111">Process01</div><div class="a t" style="left:1787px;top:111px;font-size:6.5px;font-weight:bold;color:#000">N</div><div class="a t" style="left:1787px;top:125px;font-size:6.5px;font-weight:bold;color:#000">D</div><div class="a" style="left:1696px;top:136px;width:100px;height:28px;background:#3a3a3a"></div><div class="a" style="left:1697px;top:137px;width:98px;height:26px;background:#b4b4b4"></div><div class="a" style="left:1698px;top:138px;width:24px;height:24px;overflow:hidden"><div class="a" style="left:1px;top:1px;width:22px;height:22px;border:2px solid #111;background:repeating-linear-gradient(90deg,#fff890 0,#fff890 3px,#e0a020 3px,#e0a020 4px)"></div></div><div class="a t" style="left:1726px;top:144px;font-size:11.5px;color:#111">Process02</div><div class="a t" style="left:1787px;top:141px;font-size:6.5px;font-weight:bold;color:#000">N</div><div class="a t" style="left:1787px;top:155px;font-size:6.5px;font-weight:bold;color:#000">D</div><div class="a" style="left:1696px;top:166px;width:100px;height:28px;background:#3a3a3a"></div><div class="a" style="left:1697px;top:167px;width:98px;height:26px;background:#b4b4b4"></div><div class="a" style="left:1698px;top:168px;width:24px;height:24px;overflow:hidden"><div class="a" style="left:0;top:0;width:24px;height:24px;background:linear-gradient(135deg,#20b0ff,#0030f0)"></div><div class="a t" style="left:4px;top:1px;font-size:22px;font-weight:bold;color:#ff9a40">S</div></div><div class="a t" style="left:1726px;top:174px;font-size:11.5px;color:#111">Process03</div><div class="a t" style="left:1787px;top:171px;font-size:6.5px;font-weight:bold;color:#000">N</div><div class="a t" style="left:1787px;top:185px;font-size:6.5px;font-weight:bold;color:#000">D</div><div class="a" style="left:1696px;top:196px;width:100px;height:28px;background:#3a3a3a"></div><div class="a" style="left:1697px;top:197px;width:98px;height:26px;background:#b4b4b4"></div><div class="a" style="left:1698px;top:198px;width:24px;height:24px;overflow:hidden"><div class="a" style="left:0;top:0;width:24px;height:24px;background:#124012"></div><div class="a" style="left:3px;top:3px;width:14px;height:14px;background:linear-gradient(135deg,#90a8ff,#4060e0)"></div><div class="a" style="left:7px;top:7px;width:12px;height:12px;background:rgba(140,170,255,0.6)"></div><div class="a t" style="left:10px;top:8px;font-size:16px;color:#f7a030">&#9733;</div></div><div class="a t" style="left:1726px;top:204px;font-size:11.5px;color:#111">Process04</div><div class="a t" style="left:1787px;top:201px;font-size:6.5px;font-weight:bold;color:#000">N</div><div class="a t" style="left:1787px;top:215px;font-size:6.5px;font-weight:bold;color:#000">D</div><div class="a" style="left:1696px;top:226px;width:100px;height:28px;background:#3a3a3a"></div><div class="a" style="left:1697px;top:227px;width:98px;height:26px;background:#b4b4b4"></div><div class="a" style="left:1698px;top:228px;width:24px;height:24px;overflow:hidden"><div class="a" style="left:1px;top:1px;width:22px;height:22px;border:2px solid #111;background:linear-gradient(135deg,#fff,#c8c8f0)"></div><div class="a t" style="left:5px;top:3px;font-size:17px;font-weight:bold;color:#000">&#931;</div></div><div class="a t" style="left:1726px;top:234px;font-size:11.5px;color:#111">Process05</div><div class="a t" style="left:1787px;top:231px;font-size:6.5px;font-weight:bold;color:#000">N</div><div class="a t" style="left:1787px;top:245px;font-size:6.5px;font-weight:bold;color:#000">D</div><div class="a" style="left:1696px;top:256px;width:100px;height:28px;background:#3a3a3a"></div><div class="a" style="left:1697px;top:257px;width:98px;height:26px;background:#b4b4b4"></div><div class="a" style="left:1698px;top:258px;width:24px;height:24px;overflow:hidden"><div class="a" style="left:0;top:0;width:24px;height:24px;background:linear-gradient(135deg,#20b0ff,#0030f0)"></div><div class="a t" style="left:4px;top:1px;font-size:22px;font-weight:bold;color:#ff9a40">S</div></div><div class="a t" style="left:1726px;top:264px;font-size:11.5px;color:#111">Process06</div><div class="a t" style="left:1787px;top:261px;font-size:6.5px;font-weight:bold;color:#000">N</div><div class="a t" style="left:1787px;top:275px;font-size:6.5px;font-weight:bold;color:#000">D</div><div class="a" style="left:1696px;top:286px;width:100px;height:28px;background:#3a3a3a"></div><div class="a" style="left:1697px;top:287px;width:98px;height:26px;background:#b4b4b4"></div><div class="a" style="left:1698px;top:288px;width:24px;height:24px;overflow:hidden"><div class="a" style="left:1px;top:1px;width:22px;height:22px;border:2px solid #111;background:conic-gradient(from 45deg,#0020ff 0 25%,#00e040 25% 50%,#ff1010 50% 75%,#a0a0a0 75% 100%)"></div><div class="a" style="left:6px;top:6px;width:12px;height:12px;transform:rotate(45deg);background:rgba(220,200,200,0.8)"></div></div><div class="a t" style="left:1726px;top:294px;font-size:11.5px;color:#111">Process17</div><div class="a t" style="left:1787px;top:291px;font-size:6.5px;font-weight:bold;color:#000">N</div><div class="a t" style="left:1787px;top:305px;font-size:6.5px;font-weight:bold;color:#000">D</div><div class="a" style="left:1696px;top:316px;width:100px;height:28px;background:#3a3a3a"></div><div class="a" style="left:1697px;top:317px;width:98px;height:26px;background:#b4b4b4"></div><div class="a" style="left:1698px;top:318px;width:24px;height:24px;overflow:hidden"><div class="a" style="left:0;top:0;width:24px;height:24px;background:#124012"></div><div class="a" style="left:3px;top:3px;width:14px;height:14px;background:linear-gradient(135deg,#90a8ff,#4060e0)"></div><div class="a" style="left:7px;top:7px;width:12px;height:12px;background:rgba(140,170,255,0.6)"></div><div class="a t" style="left:10px;top:8px;font-size:16px;color:#f7a030">&#9733;</div></div><div class="a t" style="left:1726px;top:324px;font-size:11.5px;color:#111">Process18</div><div class="a t" style="left:1787px;top:321px;font-size:6.5px;font-weight:bold;color:#000">N</div><div class="a t" style="left:1787px;top:335px;font-size:6.5px;font-weight:bold;color:#000">D</div><div class="a" style="left:0;top:1052px;width:1920px;height:1px;background:#fafafa"></div><svg class="a" style="left:8px;top:1055px" width="6" height="22"><pattern id="gp8_50" width="4" height="4" patternUnits="userSpaceOnUse"><rect x="0" y="0" width="2" height="2" fill="#909090"/><rect x="2" y="2" width="2" height="2" fill="#909090"/><rect x="1" y="1" width="1" height="1" fill="#c8c8c8"/><rect x="3" y="3" width="1" height="1" fill="#c8c8c8"/></pattern><rect x="0" y="0" width="6" height="22" fill="url(#gp8_50)"/></svg><div class="a" style="left:20px;top:1056px;width:244px;height:20px;background:linear-gradient(#f8f8f8,#dcdcdc);border:1px solid #888"></div><div class="a" style="left:28px;top:1060px;width:12px;height:12px;border:2px solid #555;border-top-width:3px;background:#eee"></div><div class="a t" style="left:48px;top:1060px;font-family:&quot;Liberation Mono&quot;,monospace;font-size:12.2px;color:#111">integration_R</div><div class="a" style="left:245px;top:1058px;width:1px;height:16px;background:#aaa"></div><div class="a" style="left:250px;top:1063px;width:0;height:0;border-left:5px solid transparent;border-right:5px solid transparent;border-top:5px solid #222"></div><div class="a" style="left:269px;top:1056px;width:19px;height:19px;background:#f4f4f4;border:1px solid #888"></div><div class="a" style="left:273px;top:1059px;width:11px;height:13px;border:2px solid #333;border-left-width:3px"></div><svg class="a" style="left:300px;top:1055px" width="6" height="22"><pattern id="gp300_50" width="4" height="4" patternUnits="userSpaceOnUse"><rect x="0" y="0" width="2" height="2" fill="#909090"/><rect x="2" y="2" width="2" height="2" fill="#909090"/><rect x="1" y="1" width="1" height="1" fill="#c8c8c8"/><rect x="3" y="3" width="1" height="1" fill="#c8c8c8"/></pattern><rect x="0" y="0" width="6" height="22" fill="url(#gp300_50)"/></svg><div class="a" style="left:313px;top:1056px;width:19px;height:19px;background:linear-gradient(#70a8ff,#1a48c8);border:1px solid #102060"></div><div class="a" style="left:336px;top:1056px;width:19px;height:19px;background:linear-gradient(#909090,#404040);border:1px solid #202020"></div><div class="a" style="left:359px;top:1056px;width:19px;height:19px;background:linear-gradient(#909090,#404040);border:1px solid #202020"></div><div class="a" style="left:382px;top:1056px;width:19px;height:19px;background:linear-gradient(#909090,#404040);border:1px solid #202020"></div><svg class="a" style="left:410px;top:1055px" width="6" height="22"><pattern id="gp410_50" width="4" height="4" patternUnits="userSpaceOnUse"><rect x="0" y="0" width="2" height="2" fill="#909090"/><rect x="2" y="2" width="2" height="2" fill="#909090"/><rect x="1" y="1" width="1" height="1" fill="#c8c8c8"/><rect x="3" y="3" width="1" height="1" fill="#c8c8c8"/></pattern><rect x="0" y="0" width="6" height="22" fill="url(#gp410_50)"/></svg><svg class="a" style="left:607px;top:1055px" width="6" height="22"><pattern id="gp607_50" width="4" height="4" patternUnits="userSpaceOnUse"><rect x="0" y="0" width="2" height="2" fill="#909090"/><rect x="2" y="2" width="2" height="2" fill="#909090"/><rect x="1" y="1" width="1" height="1" fill="#c8c8c8"/><rect x="3" y="3" width="1" height="1" fill="#c8c8c8"/></pattern><rect x="0" y="0" width="6" height="22" fill="url(#gp607_50)"/></svg><div class="a" style="left:976px;top:1060px;width:0;height:0;border-top:5.5px solid transparent;border-bottom:5.5px solid transparent;border-left:10px solid #222"></div><svg class="a" style="left:1002px;top:1055px" width="6" height="22"><pattern id="gp1002_50" width="4" height="4" patternUnits="userSpaceOnUse"><rect x="0" y="0" width="2" height="2" fill="#909090"/><rect x="2" y="2" width="2" height="2" fill="#909090"/><rect x="1" y="1" width="1" height="1" fill="#c8c8c8"/><rect x="3" y="3" width="1" height="1" fill="#c8c8c8"/></pattern><rect x="0" y="0" width="6" height="22" fill="url(#gp1002_50)"/></svg><div class="a t" style="left:1027px;top:1060px;font-family:&quot;Liberation Mono&quot;,monospace;font-size:11.7px;color:#222">w:4290 &#183; h:2856 &#183; n:1 &#183; f32 &#183; Gray &#183; 46.739 MiB</div><div class="a" style="left:0;top:104px;width:1px;height:948px;background:#3c3c3c;z-index:2"></div><div class="a" style="left:1919px;top:104px;width:1px;height:948px;background:#3c3c3c;z-index:2"></div></body></html>
